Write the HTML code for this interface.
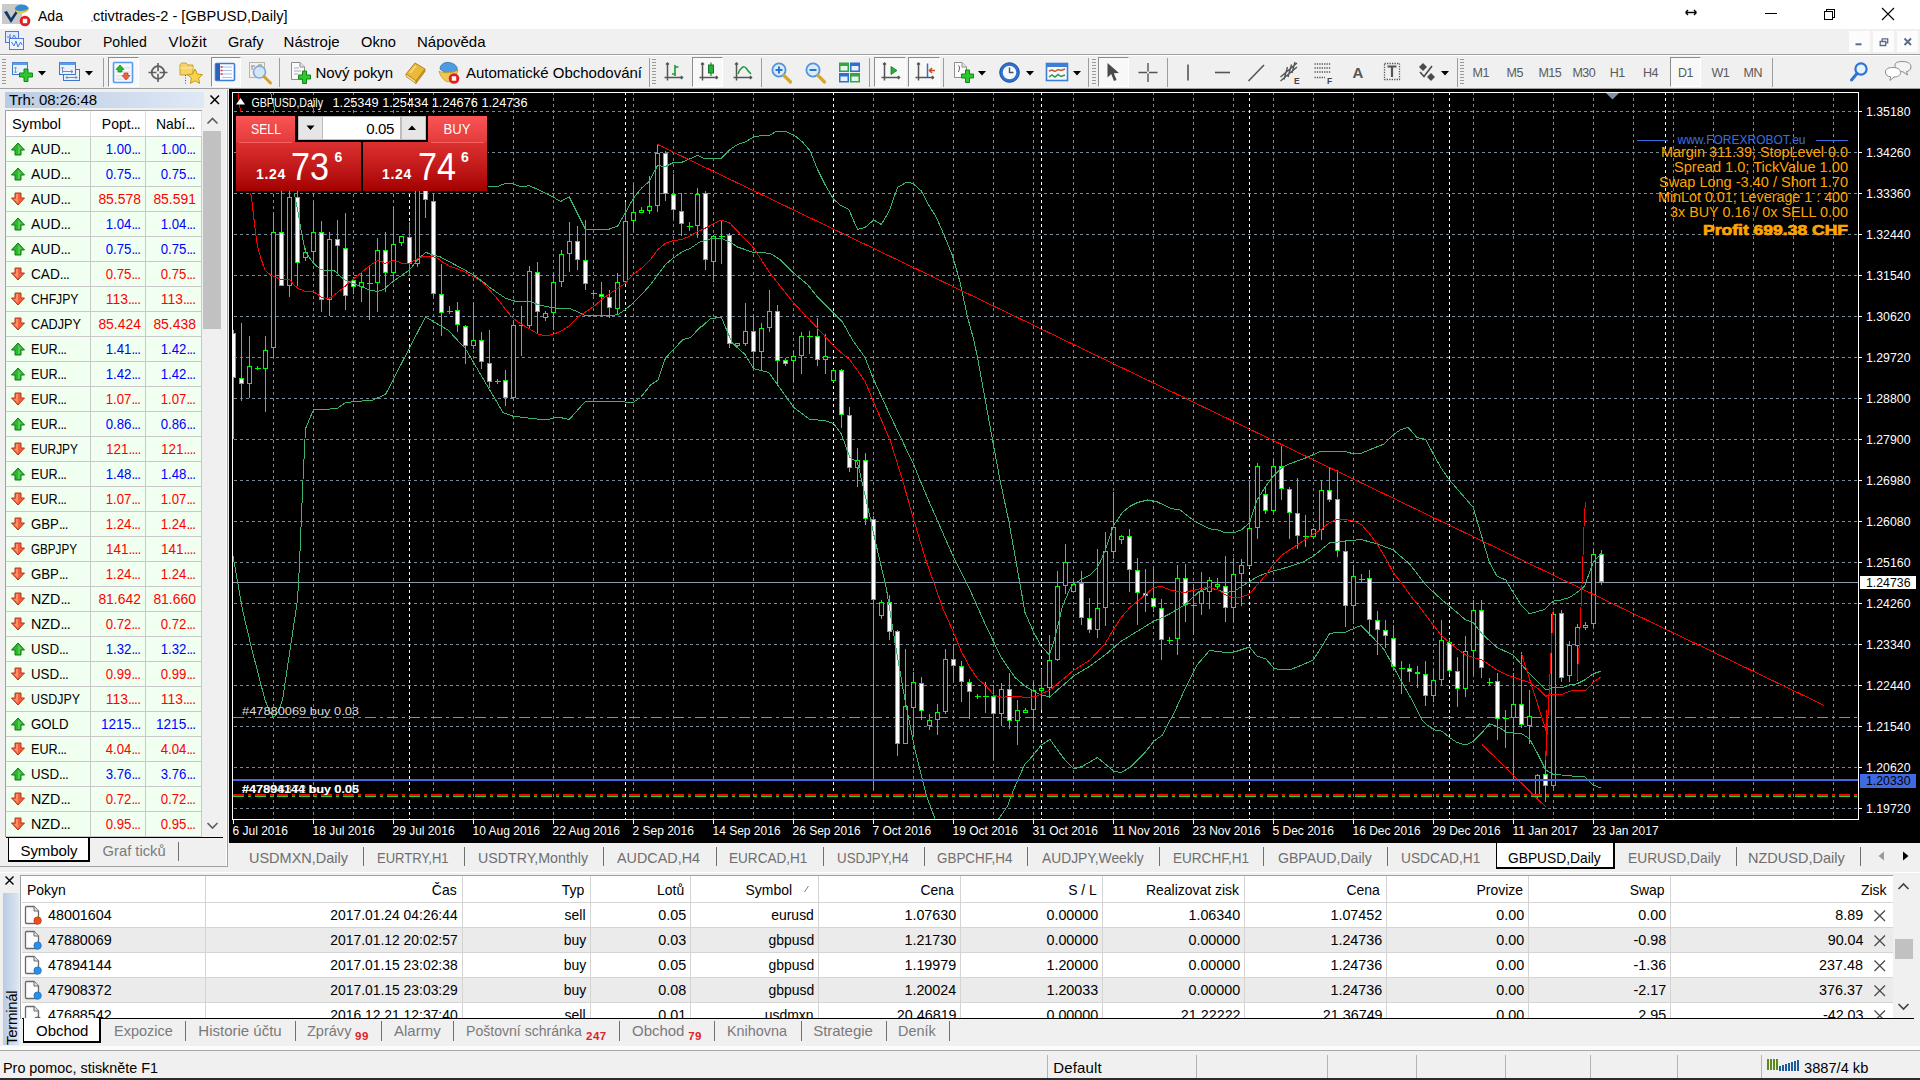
<!DOCTYPE html>
<html lang="cs"><head><meta charset="utf-8"><title>MetaTrader 4 - GBPUSD,Daily</title>
<style>
html,body{margin:0;padding:0;}
body{width:1920px;height:1080px;overflow:hidden;background:#f0f0f0;position:relative;font-family:"Liberation Sans",sans-serif;}
div{position:absolute;box-sizing:border-box;}
.t{white-space:nowrap;}
svg{position:absolute;display:block;}
</style></head><body>
<div style="left:0px;top:0px;width:1920px;height:29px;background:#fff;"></div>
<svg width="32" height="26" viewBox="0 0 32 26" style="left:1px;top:2px" ><rect x="1" y="2" width="20" height="20" fill="#c9c9c9"/>
<path d="M3 10L6 9L10 16L19 3L21 4L10 21Z" fill="#0b3a6b"/>
<path d="M14 6C16 2 24 1 27 5C29 7 27 9 22 10C18 11 14 10 14 6Z" fill="#2f8ad8"/>
<path d="M15 8C18 10 26 9 28 6L27 9C23 12 17 12 15 10Z" fill="#e8c23a"/>
<circle cx="24" cy="19" r="5.3" fill="#e02020"/><rect x="21.8" y="16.8" width="4.4" height="4.4" fill="#fff"/></svg>
<div class="t" style="left:37.50px;top:5.43px;height:22px;line-height:22px;font-size:15.5px;color:#000;transform:scaleX(0.9065);transform-origin:left center;">Ada</div>
<div class="t" style="left:92.50px;top:5.43px;height:22px;line-height:22px;font-size:15.5px;color:#000;transform:scaleX(0.9409);transform-origin:left center;">ctivtrades-2 - [GBPUSD,Daily]</div>
<div style="left:91px;top:20px;width:2px;height:2px;background:#9cc4f0;"></div>
<svg width="240" height="29" viewBox="0 0 240 29" style="left:1680px;top:0px" ><g stroke="#000" stroke-width="1.1" fill="none">
<path d="M5.5 12.5H16.5M5.5 12.5L8 10M5.5 12.5L8 15M16.5 12.5L14 10M16.5 12.5L14 15" stroke-width="1.3"/>
<path d="M85 13.5H97" shape-rendering="crispEdges"/>
<path d="M144.5 11.5H152.5V19.5H144.5Z M146.5 11.5V9.5H154.5V17.5H152.5" shape-rendering="crispEdges"/>
<path d="M202 8L214 20M214 8L202 20"/></g></svg>
<div style="left:0px;top:29px;width:1920px;height:25px;background:#f0f0f0;"></div>
<svg width="22" height="22" viewBox="0 0 22 22" style="left:4px;top:30px" ><rect x="1.5" y="1.5" width="13" height="11" fill="#dfe9fb" stroke="#4a7bd8"/><path d="M3 7H6V4M6 7L8 9L10 5L12 8" stroke="#4a7bd8" fill="none"/>
<rect x="5.5" y="8.5" width="14" height="11" fill="#eef3fd" stroke="#4a7bd8"/><path d="M7.5 12L10 16L12 11L14 17L16.5 12L18 15" stroke="#4a7bd8" fill="none"/></svg>
<div class="t" style="left:34.20px;top:31.10px;height:21px;line-height:21px;font-size:15px;color:#000;transform:scaleX(0.9800);transform-origin:left center;">Soubor</div>
<div class="t" style="left:103.20px;top:31.10px;height:21px;line-height:21px;font-size:15px;color:#000;transform:scaleX(0.9367);transform-origin:left center;">Pohled</div>
<div class="t" style="left:168.60px;top:31.10px;height:21px;line-height:21px;font-size:15px;color:#000;letter-spacing:0.303px;">Vložit</div>
<div class="t" style="left:227.60px;top:31.10px;height:21px;line-height:21px;font-size:15px;color:#000;transform:scaleX(0.9680);transform-origin:left center;">Grafy</div>
<div class="t" style="left:283.60px;top:31.10px;height:21px;line-height:21px;font-size:15px;color:#000;letter-spacing:0.018px;">Nástroje</div>
<div class="t" style="left:360.60px;top:31.10px;height:21px;line-height:21px;font-size:15px;color:#000;transform:scaleX(0.9762);transform-origin:left center;">Okno</div>
<div class="t" style="left:417.00px;top:31.10px;height:21px;line-height:21px;font-size:15px;color:#000;letter-spacing:0.015px;">Nápověda</div>
<div style="left:1848.5px;top:30.5px;width:21.5px;height:21.5px;background:#fcfcfc;"></div>
<div style="left:1872.5px;top:30.5px;width:21.5px;height:21.5px;background:#fcfcfc;"></div>
<div style="left:1896.5px;top:30.5px;width:21.5px;height:21.5px;background:#fcfcfc;"></div>
<svg width="72" height="23" viewBox="0 0 72 23" style="left:1848px;top:30px" ><g stroke="#5b6b8c" stroke-width="1.6" fill="none"><path d="M7.5 14.3H13.5" stroke-width="2"/>
<path d="M32.2 11.5H37.7V15.5H32.2Z M34.2 11V8.8H39.7V12.8H38" stroke-width="1.3"/>
<path d="M56.5 8.5L63 15M63 8.5L56.5 15" stroke-width="1.9"/></g></svg>
<div style="left:0px;top:54px;width:1920px;height:1px;background:#a0a0a0;"></div>
<div style="left:0px;top:55px;width:1920px;height:1px;background:#fff;"></div>
<div style="left:0px;top:56px;width:1920px;height:32px;background:#f0f0f0;"></div>
<div style="left:0px;top:88px;width:1920px;height:1px;background:#a0a0a0;"></div>
<div style="left:2px;top:59px;width:4px;height:27px;background:repeating-linear-gradient(#9a9a9a 0 1px,transparent 1px 3px);"></div>
<div style="left:651.5px;top:59px;width:4px;height:27px;background:repeating-linear-gradient(#9a9a9a 0 1px,transparent 1px 3px);"></div>
<div style="left:1091.5px;top:59px;width:4px;height:27px;background:repeating-linear-gradient(#9a9a9a 0 1px,transparent 1px 3px);"></div>
<div style="left:1460px;top:59px;width:4px;height:27px;background:repeating-linear-gradient(#9a9a9a 0 1px,transparent 1px 3px);"></div>
<div style="left:103px;top:58px;width:1px;height:29px;background:#9c9c9c;"></div>
<div style="left:279px;top:58px;width:1px;height:29px;background:#9c9c9c;"></div>
<div style="left:648.5px;top:58px;width:1px;height:29px;background:#9c9c9c;"></div>
<div style="left:761px;top:58px;width:1px;height:29px;background:#9c9c9c;"></div>
<div style="left:869px;top:58px;width:1px;height:29px;background:#9c9c9c;"></div>
<div style="left:943px;top:58px;width:1px;height:29px;background:#9c9c9c;"></div>
<div style="left:1087.5px;top:58px;width:1px;height:29px;background:#9c9c9c;"></div>
<div style="left:1167px;top:58px;width:1px;height:29px;background:#9c9c9c;"></div>
<div style="left:1456.5px;top:58px;width:1px;height:29px;background:#9c9c9c;"></div>
<div style="left:1771.5px;top:58px;width:1px;height:29px;background:#9c9c9c;"></div>
<div style="left:108px;top:57px;width:31px;height:30px;background:#f8f8f8;border:1px solid #fff;border-top-color:#8c8c8c;border-left-color:#8c8c8c;"></div>
<div style="left:210.5px;top:57px;width:30px;height:30px;background:#f8f8f8;border:1px solid #fff;border-top-color:#8c8c8c;border-left-color:#8c8c8c;"></div>
<div style="left:692px;top:57px;width:31px;height:30px;background:#f8f8f8;border:1px solid #fff;border-top-color:#8c8c8c;border-left-color:#8c8c8c;"></div>
<div style="left:874px;top:57px;width:31.5px;height:30px;background:#f8f8f8;border:1px solid #fff;border-top-color:#8c8c8c;border-left-color:#8c8c8c;"></div>
<div style="left:908px;top:57px;width:31.5px;height:30px;background:#f8f8f8;border:1px solid #fff;border-top-color:#8c8c8c;border-left-color:#8c8c8c;"></div>
<div style="left:1098px;top:57px;width:31px;height:30px;background:#f8f8f8;border:1px solid #fff;border-top-color:#8c8c8c;border-left-color:#8c8c8c;"></div>
<div style="left:1670px;top:57px;width:31px;height:30px;background:#f8f8f8;border:1px solid #fff;border-top-color:#8c8c8c;border-left-color:#8c8c8c;"></div>
<svg width="24" height="24" viewBox="0 0 24 24" style="left:11px;top:61px" ><rect x="1.5" y="1.5" width="15" height="12" fill="#eaf1fc" stroke="#3b78c9"/><rect x="1.5" y="1.5" width="15" height="2.5" fill="#5d9be6"/>
<path d="M4.5 6V12M3 7.5L4.5 6L6 7.5M3 10.5L4.5 12L6 10.5" stroke="#7f9cc0" fill="none"/>
<path d="M13 8H17V12H21.5V16H17V20.5H13V16H8.5V12H13Z" fill="#2fc72f" stroke="#0f8a12" stroke-width="1"/></svg>
<svg width="8" height="5" viewBox="0 0 8 5" style="left:38px;top:71px" ><path d="M0 0H8L4 4.5Z" fill="#000"/></svg>
<svg width="24" height="24" viewBox="0 0 24 24" style="left:58px;top:61px" ><rect x="5.5" y="8.5" width="16" height="11" fill="#eaf1fc" stroke="#3b78c9"/>
<rect x="1.5" y="1.5" width="16" height="12" fill="#eaf1fc" stroke="#3b78c9"/><rect x="1.5" y="1.5" width="16" height="2.5" fill="#5d9be6"/>
<path d="M4.5 6V12M3 7.5L4.5 6L6 7.5M5 10.5H15M13 9L15 10.5L13 12" stroke="#6f8fb8" fill="none"/>
<path d="M8 16.5H19M9.5 15L8 16.5L9.5 18M17.5 15L19 16.5L17.5 18" stroke="#6f8fb8" fill="none"/></svg>
<svg width="8" height="5" viewBox="0 0 8 5" style="left:85px;top:71px" ><path d="M0 0H8L4 4.5Z" fill="#000"/></svg>
<svg width="22" height="24" viewBox="0 0 22 24" style="left:112px;top:61px" ><rect x="1.5" y="1.5" width="19" height="20" rx="1" fill="#f4f7fc" stroke="#5b9ae8" stroke-width="1.6"/>
<path d="M4 7H18M4 11H18M4 15H18M4 18H18" stroke="#d4dbe6"/>
<path d="M8 4L12 8.5H10V11H6V8.5H4Z" fill="#2db52d" stroke="#138a13" stroke-width=".7"/>
<path d="M14 19L10 14.5H12V12H16V14.5H18Z" fill="#f0603a" stroke="#c43a1a" stroke-width=".7"/></svg>
<svg width="22" height="24" viewBox="0 0 22 24" style="left:147px;top:61px" ><circle cx="11" cy="11.5" r="6.3" fill="none" stroke="#5e5e5e" stroke-width="1.8"/><path d="M11 2V21M1.5 11.5H20.5" stroke="#5e5e5e" stroke-width="1.6"/><circle cx="11" cy="11.5" r="1.6" fill="#f0f0f0"/></svg>
<svg width="26" height="26" viewBox="0 0 26 26" style="left:178px;top:60px" ><path d="M2 6C2 4 3 3 4.5 3H8L10 5H15V15H2Z" fill="#f5d36a" stroke="#c9a227"/><path d="M2 8H15" stroke="#fbe9a6"/>
<path d="M7.5 15V24" stroke="#555" stroke-dasharray="1 1.5"/>
<path d="M17 9L19.3 14L24.5 14.6L20.6 18.2L21.7 23.5L17 20.8L12.3 23.5L13.4 18.2L9.5 14.6L14.7 14Z" fill="#f7d54a" stroke="#c79a1a"/></svg>
<svg width="22" height="24" viewBox="0 0 22 24" style="left:214px;top:61px" ><rect x="1.5" y="2.5" width="19" height="17" rx="1" fill="#fbfcff" stroke="#3c7fd6" stroke-width="1.6"/><rect x="2" y="3" width="4" height="16" fill="#2a62b8"/>
<path d="M8 6H18M8 9.5H18M8 13H18M8 16.5H18" stroke="#aac0ea"/><path d="M6.5 6H8.5M6.5 9.5H8.5M6.5 13H8.5" stroke="#d03030" stroke-width="1.6"/></svg>
<svg width="26" height="26" viewBox="0 0 26 26" style="left:248px;top:60px" ><rect x="1.5" y="2.5" width="15" height="15" fill="#f3f0ea" stroke="#b9b4aa"/><path d="M4 6V10M3 6H7M10 5H14M12 5V9" stroke="#8a8a8a"/>
<circle cx="11.5" cy="12" r="6" fill="#cfe4fa" fill-opacity=".85" stroke="#7fa9d8" stroke-width="1.6"/><path d="M16 16.5L22.5 23" stroke="#d6a12a" stroke-width="3" stroke-linecap="round"/></svg>
<svg width="24" height="26" viewBox="0 0 24 26" style="left:289px;top:60px" ><path d="M2.5 2.5H11L15.5 7V19.5H2.5Z" fill="#fbfbfb" stroke="#8d8d8d"/><path d="M11 2.5V7H15.5" fill="#e6e6e6" stroke="#8d8d8d"/><path d="M5 8H10M5 11H12M5 14H9" stroke="#a8a8a8"/>
<path d="M13.5 11H17.5V15H21.5V19H17.5V23.5H13.5V19H9.5V15H13.5Z" fill="#2fc72f" stroke="#0f8a12"/></svg>
<svg width="24" height="24" viewBox="0 0 24 24" style="left:404px;top:61px" ><path d="M2 13L11 2L21 8L12 20Z" fill="#e9b93a" stroke="#b5851a"/><path d="M2 13L12 20L12 22.5L2 15.5Z" fill="#f6e3a0" stroke="#b5851a" stroke-width=".8"/><path d="M12 20L21 8V10.5L12 22.5Z" fill="#c9962a" stroke="#b5851a" stroke-width=".8"/><path d="M6 12L12 5" stroke="#f7dc86" stroke-width="1.5"/></svg>
<svg width="26" height="26" viewBox="0 0 26 26" style="left:436px;top:60px" ><path d="M4 9C4 4 10 1 15 3C20 4 22 8 21 11L12 15Z" fill="#4f9be0" stroke="#2f74b8" stroke-width=".8"/><path d="M3 11C6 13 15 14 22 10L21 13C19 17 16 21 12 22C8 21 4 16 3 11Z" fill="#f0c850" stroke="#c79a1a" stroke-width=".8"/>
<circle cx="18" cy="18.5" r="5.3" fill="#e02020"/><rect x="15.8" y="16.3" width="4.4" height="4.4" fill="#fff"/></svg>
<svg width="22" height="24" viewBox="0 0 22 24" style="left:663px;top:61px" ><path d="M4.5 2V19.5M1.5 16.5H19.5M3 3.5L4.5 2L6 3.5M18 15L19.5 16.5L18 18" stroke="#555" stroke-width="1.5" fill="none"/><path d="M12 4V15M12 6H15.5M9 13H12" stroke="#1c9a2c" stroke-width="1.6" fill="none"/></svg>
<svg width="22" height="24" viewBox="0 0 22 24" style="left:698px;top:61px" ><path d="M4.5 2V19.5M1.5 16.5H19.5M3 3.5L4.5 2L6 3.5M18 15L19.5 16.5L18 18" stroke="#555" stroke-width="1.5" fill="none"/><path d="M13 1.5V15" stroke="#1c9a2c" stroke-width="1.3"/><rect x="10.5" y="4" width="5" height="8" fill="#24b03a" stroke="#157a22"/></svg>
<svg width="22" height="24" viewBox="0 0 22 24" style="left:732px;top:61px" ><path d="M4.5 2V19.5M1.5 16.5H19.5M3 3.5L4.5 2L6 3.5M18 15L19.5 16.5L18 18" stroke="#555" stroke-width="1.5" fill="none"/><path d="M6 13C8 7 12 4 14 7C16 10 18 12 19 13" stroke="#1c9a2c" stroke-width="1.4" fill="none"/></svg>
<svg width="24" height="24" viewBox="0 0 24 24" style="left:770px;top:61px" ><circle cx="9" cy="9" r="6.6" fill="#d9ecfb" stroke="#4f94dc" stroke-width="1.8"/><path d="M14 14.5L20.5 21" stroke="#d9a52c" stroke-width="3.2" stroke-linecap="round"/><path d="M5.5 9H12.5M9 5.5V12.5" stroke="#2f74c8" stroke-width="2"/></svg>
<svg width="24" height="24" viewBox="0 0 24 24" style="left:804px;top:61px" ><circle cx="9" cy="9" r="6.6" fill="#d9ecfb" stroke="#4f94dc" stroke-width="1.8"/><path d="M14 14.5L20.5 21" stroke="#d9a52c" stroke-width="3.2" stroke-linecap="round"/><path d="M5.5 9H12.5" stroke="#2f74c8" stroke-width="2"/></svg>
<svg width="23" height="24" viewBox="0 0 23 24" style="left:838px;top:61px" ><rect x="1" y="1.5" width="10" height="9.5" fill="#34a834"/><rect x="12" y="1.5" width="10" height="9.5" fill="#2f6fd0"/><rect x="1" y="12" width="10" height="9.5" fill="#2f6fd0"/><rect x="12" y="12" width="10" height="9.5" fill="#34a834"/>
<g fill="#e8f0fb"><rect x="2.5" y="5" width="7" height="4.5"/><rect x="13.5" y="5" width="7" height="4.5"/><rect x="2.5" y="15.5" width="7" height="4.5"/><rect x="13.5" y="15.5" width="7" height="4.5"/></g></svg>
<svg width="22" height="24" viewBox="0 0 22 24" style="left:880px;top:61px" ><path d="M4.5 2V19.5M1.5 16.5H19.5M3 3.5L4.5 2L6 3.5M18 15L19.5 16.5L18 18" stroke="#555" stroke-width="1.5" fill="none"/><path d="M11 5.5L17 9.5L11 13.5Z" fill="#24b03a" stroke="#157a22" stroke-width=".8"/></svg>
<svg width="24" height="24" viewBox="0 0 24 24" style="left:914px;top:61px" ><path d="M4.5 2V19.5M1.5 16.5H19.5M3 3.5L4.5 2L6 3.5M18 15L19.5 16.5L18 18" stroke="#555" stroke-width="1.5" fill="none"/><path d="M13.5 2.5V16" stroke="#2f6fd0" stroke-width="1.5"/><path d="M21 9.5H16M18 7L15.5 9.5L18 12" stroke="#d04a20" stroke-width="1.6" fill="none"/></svg>
<svg width="26" height="26" viewBox="0 0 26 26" style="left:952px;top:60px" ><path d="M2.5 2.5H10L14.5 7V17.5H2.5Z" fill="#fbfbfb" stroke="#8d8d8d"/><path d="M10 2.5V7H14.5" fill="#e6e6e6" stroke="#8d8d8d"/><path d="M6 6C8 5 8 8 6.5 12" stroke="#666" fill="none"/>
<path d="M13.5 10H17.5V14H21.5V18H17.5V22.5H13.5V18H9.5V14H13.5Z" fill="#2fc72f" stroke="#0f8a12"/></svg>
<svg width="8" height="5" viewBox="0 0 8 5" style="left:978px;top:71px" ><path d="M0 0H8L4 4.5Z" fill="#000"/></svg>
<svg width="24" height="24" viewBox="0 0 24 24" style="left:998px;top:61px" ><circle cx="11.5" cy="11.5" r="9.8" fill="#2f6fd0" stroke="#1f4f9c"/><circle cx="11.5" cy="11.5" r="6.8" fill="#f4f8ff"/><path d="M11.5 6.5V11.5H15.5" stroke="#555" stroke-width="1.4" fill="none"/></svg>
<svg width="8" height="5" viewBox="0 0 8 5" style="left:1025.5px;top:71px" ><path d="M0 0H8L4 4.5Z" fill="#000"/></svg>
<svg width="24" height="24" viewBox="0 0 24 24" style="left:1045px;top:61px" ><rect x="1.5" y="2.5" width="21" height="17" fill="#f6f9ff" stroke="#3c7fd6" stroke-width="1.6"/><rect x="1.5" y="2.5" width="21" height="3.5" fill="#3c7fd6"/>
<path d="M4 10L7 9L10 10.5L13 8.5L16 9.5L20 8" stroke="#d0522a" stroke-width="1.5" fill="none"/><path d="M4 16L7 14L10 16L13 13.5L16 15.5L20 14" stroke="#2a9a3a" stroke-width="1.5" fill="none"/></svg>
<svg width="8" height="5" viewBox="0 0 8 5" style="left:1072.5px;top:71px" ><path d="M0 0H8L4 4.5Z" fill="#000"/></svg>
<svg width="20" height="24" viewBox="0 0 20 24" style="left:1104px;top:61px" ><path d="M3.5 2L3.5 16.5L7.2 13L10 20L12.6 19L9.8 12.2L15 12Z" fill="#4a4a4a"/></svg>
<svg width="22" height="24" viewBox="0 0 22 24" style="left:1137px;top:61px" ><path d="M11 2V21M1.5 11.5H20.5" stroke="#555" stroke-width="1.4"/><rect x="10" y="10.5" width="2" height="2" fill="#f0f0f0"/></svg>
<svg width="16" height="24" viewBox="0 0 16 24" style="left:1180px;top:61px" ><path d="M8 3.5V19.5" stroke="#555" stroke-width="1.6"/></svg>
<svg width="20" height="24" viewBox="0 0 20 24" style="left:1213px;top:61px" ><path d="M2 11.5H17" stroke="#555" stroke-width="1.6"/></svg>
<svg width="20" height="24" viewBox="0 0 20 24" style="left:1246px;top:61px" ><path d="M2.5 20L18 4" stroke="#555" stroke-width="1.6"/></svg>
<svg width="22" height="26" viewBox="0 0 22 26" style="left:1279px;top:60px" ><path d="M1.5 17L18 3M1.5 21L18 7M5 19.5L8.5 7M9 17L12.5 4.5M13 13L16 2" stroke="#555" stroke-width="1.4" fill="none"/><text x="15" y="24" font-family="Liberation Sans, sans-serif" font-size="8.5" font-weight="bold" fill="#444">E</text></svg>
<svg width="22" height="26" viewBox="0 0 22 26" style="left:1313px;top:60px" ><path d="M1.5 4H18M1.5 8H18M1.5 12H18M1.5 17.5H12" stroke="#555" stroke-width="1.4" stroke-dasharray="1.3 1.1" fill="none"/><text x="14" y="24" font-family="Liberation Sans, sans-serif" font-size="8.5" font-weight="bold" fill="#444">F</text></svg>
<svg width="20" height="26" viewBox="0 0 20 26" style="left:1383px;top:60px" ><rect x="1.5" y="3.5" width="15" height="16" fill="none" stroke="#555" stroke-width="1.3" stroke-dasharray="1.3 1.2"/><path d="M4.5 6.5H13.5M9 6.5V17" stroke="#555" stroke-width="2.2"/></svg>
<svg width="22" height="26" viewBox="0 0 22 26" style="left:1416px;top:60px" ><path d="M7 3L11 7L7 11L3 7Z M15 13L19 17L15 21L11 17Z" fill="#4a4a4a"/><path d="M4 12L8 16.5L16 6" stroke="#4a4a4a" stroke-width="1.6" fill="none"/></svg>
<svg width="8" height="5" viewBox="0 0 8 5" style="left:1440.5px;top:71px" ><path d="M0 0H8L4 4.5Z" fill="#000"/></svg>
<svg width="22" height="26" viewBox="0 0 22 26" style="left:1848px;top:60px" ><circle cx="13" cy="9" r="5.6" fill="#e8f2fd" stroke="#2f74d0" stroke-width="2.2"/><path d="M9 13.5L3.5 20" stroke="#2f74d0" stroke-width="3" stroke-linecap="round"/></svg>
<svg width="30" height="26" viewBox="0 0 30 26" style="left:1884px;top:60px" ><path d="M11 5C11 2.5 14 1.5 18.5 1.5C23 1.5 27 3 27 7C27 10 24 11.5 22.5 11.5L23.5 15L19 11.8C14 11.8 11 9 11 5Z" fill="#f4f4f4" stroke="#8a8a8a"/><path d="M1.5 12C1.5 8.5 5 7.5 9 7.5C13 7.5 16.5 9 16.5 12.5C16.5 16 13 17 10 17L6 20.5L6.5 16.8C3.5 16.5 1.5 15 1.5 12Z" fill="#fff" stroke="#8a8a8a"/></svg>
<div class="t" style="left:315.50px;top:61.80px;height:21px;line-height:21px;font-size:15px;color:#000;letter-spacing:-0.087px;">Nový pokyn</div>
<div class="t" style="left:466.00px;top:61.80px;height:21px;line-height:21px;font-size:15px;color:#000;letter-spacing:0.003px;">Automatické Obchodování</div>
<div class="t" style="left:1352.38px;top:61.80px;height:21px;line-height:21px;font-size:15px;color:#555;letter-spacing:0.000px;font-weight:bold;">A</div>
<div class="t" style="left:1472.59px;top:63.60px;height:18px;line-height:18px;font-size:12.5px;color:#5a5a5a;letter-spacing:-0.550px;">M1</div>
<div class="t" style="left:1506.59px;top:63.60px;height:18px;line-height:18px;font-size:12.5px;color:#5a5a5a;letter-spacing:-0.550px;">M5</div>
<div class="t" style="left:1538.39px;top:63.60px;height:18px;line-height:18px;font-size:12.5px;color:#5a5a5a;letter-spacing:-0.550px;">M15</div>
<div class="t" style="left:1572.39px;top:63.60px;height:18px;line-height:18px;font-size:12.5px;color:#5a5a5a;letter-spacing:-0.550px;">M30</div>
<div class="t" style="left:1609.79px;top:63.60px;height:18px;line-height:18px;font-size:12.5px;color:#5a5a5a;letter-spacing:-0.550px;">H1</div>
<div class="t" style="left:1642.99px;top:63.60px;height:18px;line-height:18px;font-size:12.5px;color:#5a5a5a;letter-spacing:-0.550px;">H4</div>
<div class="t" style="left:1677.99px;top:63.60px;height:18px;line-height:18px;font-size:12.5px;color:#5a5a5a;letter-spacing:-0.550px;">D1</div>
<div class="t" style="left:1711.60px;top:63.60px;height:18px;line-height:18px;font-size:12.5px;color:#5a5a5a;letter-spacing:-0.550px;">W1</div>
<div class="t" style="left:1743.56px;top:63.60px;height:18px;line-height:18px;font-size:12.5px;color:#5a5a5a;letter-spacing:-0.550px;">MN</div>
<div style="left:0px;top:89px;width:229px;height:781px;background:#f0f0f0;"></div>
<div style="left:226px;top:90px;width:1px;height:776px;background:#fff;"></div>
<div style="left:227px;top:90px;width:1px;height:777px;background:#a0a0a0;"></div>
<div style="left:0px;top:866px;width:228px;height:1px;background:#a0a0a0;"></div>
<div style="left:5px;top:92px;width:199px;height:16px;background:linear-gradient(90deg,#b9cbe4,#dfe8f5);"></div>
<div class="t" style="left:9.00px;top:89.30px;height:21px;line-height:21px;font-size:15px;color:#000;letter-spacing:-0.051px;">Trh: 08:26:48</div>
<svg width="12" height="12" style="left:209px;top:94px"><path d="M1.5 1.5L10 10M10 1.5L1.5 10" stroke="#000" stroke-width="1.5" fill="none"/></svg>
<div style="left:5px;top:110px;width:197px;height:727px;background:#fff;border-left:1px solid #a0a0a0;border-top:1px solid #a0a0a0;"></div>
<div style="left:90px;top:111px;width:1px;height:26px;background:#e0e0e0;"></div>
<div style="left:145px;top:111px;width:1px;height:26px;background:#e0e0e0;"></div>
<div style="left:201px;top:111px;width:1px;height:26px;background:#e0e0e0;"></div>
<div class="t" style="left:12.00px;top:113.00px;height:21px;line-height:21px;font-size:15px;color:#000;transform:scaleX(0.9797);transform-origin:left center;">Symbol</div>
<div class="t" style="left:99.11px;top:113.00px;height:21px;line-height:21px;font-size:15px;color:#000;transform:scaleX(0.9300);transform-origin:right center;">Popt<span style="letter-spacing:-0.82px">...</span></div>
<div class="t" style="left:153.29px;top:113.00px;height:21px;line-height:21px;font-size:15px;color:#000;transform:scaleX(0.9300);transform-origin:right center;">Nabí<span style="letter-spacing:-0.82px">...</span></div>
<div style="left:6px;top:137px;width:196px;height:700px;background:#f0fff0;"></div>
<svg width="197" height="701" style="left:5px;top:136px" shape-rendering="crispEdges"><path d="M1 0.5H197 M1 25.5H197 M1 50.5H197 M1 75.5H197 M1 100.5H197 M1 125.5H197 M1 150.5H197 M1 175.5H197 M1 200.5H197 M1 225.5H197 M1 250.5H197 M1 275.5H197 M1 300.5H197 M1 325.5H197 M1 350.5H197 M1 375.5H197 M1 400.5H197 M1 425.5H197 M1 450.5H197 M1 475.5H197 M1 500.5H197 M1 525.5H197 M1 550.5H197 M1 575.5H197 M1 600.5H197 M1 625.5H197 M1 650.5H197 M1 675.5H197 M1 700.5H197 M85.5 0V700M140.5 0V700M196.5 0V700" stroke="#c8c8c8" stroke-width="1" fill="none"/></svg>
<div class="t" style="left:31.20px;top:138.10px;height:21px;line-height:21px;font-size:15px;color:#000;transform:scaleX(0.9353);transform-origin:left center;">AUD<span style="letter-spacing:-0.82px">...</span></div>
<div class="t" style="left:101.28px;top:138.10px;height:21px;line-height:21px;font-size:15px;color:#0000ff;transform:scaleX(0.8796);transform-origin:right center;">1.00<span style="letter-spacing:-0.82px">...</span></div>
<div class="t" style="left:156.28px;top:138.10px;height:21px;line-height:21px;font-size:15px;color:#0000ff;transform:scaleX(0.8796);transform-origin:right center;">1.00<span style="letter-spacing:-0.82px">...</span></div>
<div class="t" style="left:31.20px;top:163.10px;height:21px;line-height:21px;font-size:15px;color:#000;transform:scaleX(0.9353);transform-origin:left center;">AUD<span style="letter-spacing:-0.82px">...</span></div>
<div class="t" style="left:101.28px;top:163.10px;height:21px;line-height:21px;font-size:15px;color:#0000ff;transform:scaleX(0.8796);transform-origin:right center;">0.75<span style="letter-spacing:-0.82px">...</span></div>
<div class="t" style="left:156.28px;top:163.10px;height:21px;line-height:21px;font-size:15px;color:#0000ff;transform:scaleX(0.8796);transform-origin:right center;">0.75<span style="letter-spacing:-0.82px">...</span></div>
<div class="t" style="left:31.20px;top:188.10px;height:21px;line-height:21px;font-size:15px;color:#000;transform:scaleX(0.9353);transform-origin:left center;">AUD<span style="letter-spacing:-0.82px">...</span></div>
<div class="t" style="left:94.62px;top:188.10px;height:21px;line-height:21px;font-size:15px;color:#ff0000;transform:scaleX(0.9264);transform-origin:right center;">85.578</div>
<div class="t" style="left:149.62px;top:188.10px;height:21px;line-height:21px;font-size:15px;color:#ff0000;transform:scaleX(0.9264);transform-origin:right center;">85.591</div>
<div class="t" style="left:31.20px;top:213.10px;height:21px;line-height:21px;font-size:15px;color:#000;transform:scaleX(0.9353);transform-origin:left center;">AUD<span style="letter-spacing:-0.82px">...</span></div>
<div class="t" style="left:101.28px;top:213.10px;height:21px;line-height:21px;font-size:15px;color:#0000ff;transform:scaleX(0.8796);transform-origin:right center;">1.04<span style="letter-spacing:-0.82px">...</span></div>
<div class="t" style="left:156.28px;top:213.10px;height:21px;line-height:21px;font-size:15px;color:#0000ff;transform:scaleX(0.8796);transform-origin:right center;">1.04<span style="letter-spacing:-0.82px">...</span></div>
<div class="t" style="left:31.20px;top:238.10px;height:21px;line-height:21px;font-size:15px;color:#000;transform:scaleX(0.9353);transform-origin:left center;">AUD<span style="letter-spacing:-0.82px">...</span></div>
<div class="t" style="left:101.28px;top:238.10px;height:21px;line-height:21px;font-size:15px;color:#0000ff;transform:scaleX(0.8796);transform-origin:right center;">0.75<span style="letter-spacing:-0.82px">...</span></div>
<div class="t" style="left:156.28px;top:238.10px;height:21px;line-height:21px;font-size:15px;color:#0000ff;transform:scaleX(0.8796);transform-origin:right center;">0.75<span style="letter-spacing:-0.82px">...</span></div>
<div class="t" style="left:31.20px;top:263.10px;height:21px;line-height:21px;font-size:15px;color:#000;transform:scaleX(0.9113);transform-origin:left center;">CAD<span style="letter-spacing:-0.82px">...</span></div>
<div class="t" style="left:101.28px;top:263.10px;height:21px;line-height:21px;font-size:15px;color:#ff0000;transform:scaleX(0.8796);transform-origin:right center;">0.75<span style="letter-spacing:-0.82px">...</span></div>
<div class="t" style="left:156.28px;top:263.10px;height:21px;line-height:21px;font-size:15px;color:#ff0000;transform:scaleX(0.8796);transform-origin:right center;">0.75<span style="letter-spacing:-0.82px">...</span></div>
<div class="t" style="left:31.20px;top:288.10px;height:21px;line-height:21px;font-size:15px;color:#000;transform:scaleX(0.8142);transform-origin:left center;">CHFJPY</div>
<div class="t" style="left:103.22px;top:288.10px;height:21px;line-height:21px;font-size:15px;color:#ff0000;transform:scaleX(0.9253);transform-origin:right center;">113<span style="letter-spacing:-0.82px">....</span></div>
<div class="t" style="left:158.22px;top:288.10px;height:21px;line-height:21px;font-size:15px;color:#ff0000;transform:scaleX(0.9253);transform-origin:right center;">113<span style="letter-spacing:-0.82px">....</span></div>
<div class="t" style="left:31.20px;top:313.10px;height:21px;line-height:21px;font-size:15px;color:#000;transform:scaleX(0.8449);transform-origin:left center;">CADJPY</div>
<div class="t" style="left:94.62px;top:313.10px;height:21px;line-height:21px;font-size:15px;color:#ff0000;transform:scaleX(0.9264);transform-origin:right center;">85.424</div>
<div class="t" style="left:149.62px;top:313.10px;height:21px;line-height:21px;font-size:15px;color:#ff0000;transform:scaleX(0.9264);transform-origin:right center;">85.438</div>
<div class="t" style="left:31.20px;top:338.10px;height:21px;line-height:21px;font-size:15px;color:#000;transform:scaleX(0.8394);transform-origin:left center;">EUR<span style="letter-spacing:-0.82px">...</span></div>
<div class="t" style="left:101.28px;top:338.10px;height:21px;line-height:21px;font-size:15px;color:#0000ff;transform:scaleX(0.8796);transform-origin:right center;">1.41<span style="letter-spacing:-0.82px">...</span></div>
<div class="t" style="left:156.28px;top:338.10px;height:21px;line-height:21px;font-size:15px;color:#0000ff;transform:scaleX(0.8796);transform-origin:right center;">1.42<span style="letter-spacing:-0.82px">...</span></div>
<div class="t" style="left:31.20px;top:363.10px;height:21px;line-height:21px;font-size:15px;color:#000;transform:scaleX(0.8394);transform-origin:left center;">EUR<span style="letter-spacing:-0.82px">...</span></div>
<div class="t" style="left:101.28px;top:363.10px;height:21px;line-height:21px;font-size:15px;color:#0000ff;transform:scaleX(0.8796);transform-origin:right center;">1.42<span style="letter-spacing:-0.82px">...</span></div>
<div class="t" style="left:156.28px;top:363.10px;height:21px;line-height:21px;font-size:15px;color:#0000ff;transform:scaleX(0.8796);transform-origin:right center;">1.42<span style="letter-spacing:-0.82px">...</span></div>
<div class="t" style="left:31.20px;top:388.10px;height:21px;line-height:21px;font-size:15px;color:#000;transform:scaleX(0.8394);transform-origin:left center;">EUR<span style="letter-spacing:-0.82px">...</span></div>
<div class="t" style="left:101.28px;top:388.10px;height:21px;line-height:21px;font-size:15px;color:#ff0000;transform:scaleX(0.8796);transform-origin:right center;">1.07<span style="letter-spacing:-0.82px">...</span></div>
<div class="t" style="left:156.28px;top:388.10px;height:21px;line-height:21px;font-size:15px;color:#ff0000;transform:scaleX(0.8796);transform-origin:right center;">1.07<span style="letter-spacing:-0.82px">...</span></div>
<div class="t" style="left:31.20px;top:413.10px;height:21px;line-height:21px;font-size:15px;color:#000;transform:scaleX(0.8394);transform-origin:left center;">EUR<span style="letter-spacing:-0.82px">...</span></div>
<div class="t" style="left:101.28px;top:413.10px;height:21px;line-height:21px;font-size:15px;color:#0000ff;transform:scaleX(0.8796);transform-origin:right center;">0.86<span style="letter-spacing:-0.82px">...</span></div>
<div class="t" style="left:156.28px;top:413.10px;height:21px;line-height:21px;font-size:15px;color:#0000ff;transform:scaleX(0.8796);transform-origin:right center;">0.86<span style="letter-spacing:-0.82px">...</span></div>
<div class="t" style="left:31.20px;top:438.10px;height:21px;line-height:21px;font-size:15px;color:#000;transform:scaleX(0.7942);transform-origin:left center;">EURJPY</div>
<div class="t" style="left:102.10px;top:438.10px;height:21px;line-height:21px;font-size:15px;color:#ff0000;transform:scaleX(0.8985);transform-origin:right center;">121<span style="letter-spacing:-0.82px">....</span></div>
<div class="t" style="left:157.10px;top:438.10px;height:21px;line-height:21px;font-size:15px;color:#ff0000;transform:scaleX(0.8985);transform-origin:right center;">121<span style="letter-spacing:-0.82px">....</span></div>
<div class="t" style="left:31.20px;top:463.10px;height:21px;line-height:21px;font-size:15px;color:#000;transform:scaleX(0.8394);transform-origin:left center;">EUR<span style="letter-spacing:-0.82px">...</span></div>
<div class="t" style="left:101.28px;top:463.10px;height:21px;line-height:21px;font-size:15px;color:#0000ff;transform:scaleX(0.8796);transform-origin:right center;">1.48<span style="letter-spacing:-0.82px">...</span></div>
<div class="t" style="left:156.28px;top:463.10px;height:21px;line-height:21px;font-size:15px;color:#0000ff;transform:scaleX(0.8796);transform-origin:right center;">1.48<span style="letter-spacing:-0.82px">...</span></div>
<div class="t" style="left:31.20px;top:488.10px;height:21px;line-height:21px;font-size:15px;color:#000;transform:scaleX(0.8394);transform-origin:left center;">EUR<span style="letter-spacing:-0.82px">...</span></div>
<div class="t" style="left:101.28px;top:488.10px;height:21px;line-height:21px;font-size:15px;color:#ff0000;transform:scaleX(0.8796);transform-origin:right center;">1.07<span style="letter-spacing:-0.82px">...</span></div>
<div class="t" style="left:156.28px;top:488.10px;height:21px;line-height:21px;font-size:15px;color:#ff0000;transform:scaleX(0.8796);transform-origin:right center;">1.07<span style="letter-spacing:-0.82px">...</span></div>
<div class="t" style="left:31.20px;top:513.10px;height:21px;line-height:21px;font-size:15px;color:#000;transform:scaleX(0.8799);transform-origin:left center;">GBP<span style="letter-spacing:-0.82px">...</span></div>
<div class="t" style="left:101.28px;top:513.10px;height:21px;line-height:21px;font-size:15px;color:#ff0000;transform:scaleX(0.8796);transform-origin:right center;">1.24<span style="letter-spacing:-0.82px">...</span></div>
<div class="t" style="left:156.28px;top:513.10px;height:21px;line-height:21px;font-size:15px;color:#ff0000;transform:scaleX(0.8796);transform-origin:right center;">1.24<span style="letter-spacing:-0.82px">...</span></div>
<div class="t" style="left:31.20px;top:538.10px;height:21px;line-height:21px;font-size:15px;color:#000;transform:scaleX(0.7771);transform-origin:left center;">GBPJPY</div>
<div class="t" style="left:102.10px;top:538.10px;height:21px;line-height:21px;font-size:15px;color:#ff0000;transform:scaleX(0.8985);transform-origin:right center;">141<span style="letter-spacing:-0.82px">....</span></div>
<div class="t" style="left:157.10px;top:538.10px;height:21px;line-height:21px;font-size:15px;color:#ff0000;transform:scaleX(0.8985);transform-origin:right center;">141<span style="letter-spacing:-0.82px">....</span></div>
<div class="t" style="left:31.20px;top:563.10px;height:21px;line-height:21px;font-size:15px;color:#000;transform:scaleX(0.8799);transform-origin:left center;">GBP<span style="letter-spacing:-0.82px">...</span></div>
<div class="t" style="left:101.28px;top:563.10px;height:21px;line-height:21px;font-size:15px;color:#ff0000;transform:scaleX(0.8796);transform-origin:right center;">1.24<span style="letter-spacing:-0.82px">...</span></div>
<div class="t" style="left:156.28px;top:563.10px;height:21px;line-height:21px;font-size:15px;color:#ff0000;transform:scaleX(0.8796);transform-origin:right center;">1.24<span style="letter-spacing:-0.82px">...</span></div>
<div class="t" style="left:31.20px;top:588.10px;height:21px;line-height:21px;font-size:15px;color:#000;transform:scaleX(0.9546);transform-origin:left center;">NZD<span style="letter-spacing:-0.82px">...</span></div>
<div class="t" style="left:94.62px;top:588.10px;height:21px;line-height:21px;font-size:15px;color:#ff0000;transform:scaleX(0.9264);transform-origin:right center;">81.642</div>
<div class="t" style="left:149.62px;top:588.10px;height:21px;line-height:21px;font-size:15px;color:#ff0000;transform:scaleX(0.9264);transform-origin:right center;">81.660</div>
<div class="t" style="left:31.20px;top:613.10px;height:21px;line-height:21px;font-size:15px;color:#000;transform:scaleX(0.9546);transform-origin:left center;">NZD<span style="letter-spacing:-0.82px">...</span></div>
<div class="t" style="left:101.28px;top:613.10px;height:21px;line-height:21px;font-size:15px;color:#ff0000;transform:scaleX(0.8796);transform-origin:right center;">0.72<span style="letter-spacing:-0.82px">...</span></div>
<div class="t" style="left:156.28px;top:613.10px;height:21px;line-height:21px;font-size:15px;color:#ff0000;transform:scaleX(0.8796);transform-origin:right center;">0.72<span style="letter-spacing:-0.82px">...</span></div>
<div class="t" style="left:31.20px;top:638.10px;height:21px;line-height:21px;font-size:15px;color:#000;transform:scaleX(0.8873);transform-origin:left center;">USD<span style="letter-spacing:-0.82px">...</span></div>
<div class="t" style="left:101.28px;top:638.10px;height:21px;line-height:21px;font-size:15px;color:#0000ff;transform:scaleX(0.8796);transform-origin:right center;">1.32<span style="letter-spacing:-0.82px">...</span></div>
<div class="t" style="left:156.28px;top:638.10px;height:21px;line-height:21px;font-size:15px;color:#0000ff;transform:scaleX(0.8796);transform-origin:right center;">1.32<span style="letter-spacing:-0.82px">...</span></div>
<div class="t" style="left:31.20px;top:663.10px;height:21px;line-height:21px;font-size:15px;color:#000;transform:scaleX(0.8873);transform-origin:left center;">USD<span style="letter-spacing:-0.82px">...</span></div>
<div class="t" style="left:101.28px;top:663.10px;height:21px;line-height:21px;font-size:15px;color:#ff0000;transform:scaleX(0.8796);transform-origin:right center;">0.99<span style="letter-spacing:-0.82px">...</span></div>
<div class="t" style="left:156.28px;top:663.10px;height:21px;line-height:21px;font-size:15px;color:#ff0000;transform:scaleX(0.8796);transform-origin:right center;">0.99<span style="letter-spacing:-0.82px">...</span></div>
<div class="t" style="left:31.20px;top:688.10px;height:21px;line-height:21px;font-size:15px;color:#000;transform:scaleX(0.8280);transform-origin:left center;">USDJPY</div>
<div class="t" style="left:103.22px;top:688.10px;height:21px;line-height:21px;font-size:15px;color:#ff0000;transform:scaleX(0.9253);transform-origin:right center;">113<span style="letter-spacing:-0.82px">....</span></div>
<div class="t" style="left:158.22px;top:688.10px;height:21px;line-height:21px;font-size:15px;color:#ff0000;transform:scaleX(0.9253);transform-origin:right center;">113<span style="letter-spacing:-0.82px">....</span></div>
<div class="t" style="left:31.20px;top:713.10px;height:21px;line-height:21px;font-size:15px;color:#000;transform:scaleX(0.8822);transform-origin:left center;">GOLD</div>
<div class="t" style="left:97.10px;top:713.10px;height:21px;line-height:21px;font-size:15px;color:#0000ff;transform:scaleX(0.9102);transform-origin:right center;">1215<span style="letter-spacing:-0.82px">...</span></div>
<div class="t" style="left:152.10px;top:713.10px;height:21px;line-height:21px;font-size:15px;color:#0000ff;transform:scaleX(0.9102);transform-origin:right center;">1215<span style="letter-spacing:-0.82px">...</span></div>
<div class="t" style="left:31.20px;top:738.10px;height:21px;line-height:21px;font-size:15px;color:#000;transform:scaleX(0.8394);transform-origin:left center;">EUR<span style="letter-spacing:-0.82px">...</span></div>
<div class="t" style="left:101.28px;top:738.10px;height:21px;line-height:21px;font-size:15px;color:#ff0000;transform:scaleX(0.8796);transform-origin:right center;">4.04<span style="letter-spacing:-0.82px">...</span></div>
<div class="t" style="left:156.28px;top:738.10px;height:21px;line-height:21px;font-size:15px;color:#ff0000;transform:scaleX(0.8796);transform-origin:right center;">4.04<span style="letter-spacing:-0.82px">...</span></div>
<div class="t" style="left:31.20px;top:763.10px;height:21px;line-height:21px;font-size:15px;color:#000;transform:scaleX(0.8873);transform-origin:left center;">USD<span style="letter-spacing:-0.82px">...</span></div>
<div class="t" style="left:101.28px;top:763.10px;height:21px;line-height:21px;font-size:15px;color:#0000ff;transform:scaleX(0.8796);transform-origin:right center;">3.76<span style="letter-spacing:-0.82px">...</span></div>
<div class="t" style="left:156.28px;top:763.10px;height:21px;line-height:21px;font-size:15px;color:#0000ff;transform:scaleX(0.8796);transform-origin:right center;">3.76<span style="letter-spacing:-0.82px">...</span></div>
<div class="t" style="left:31.20px;top:788.10px;height:21px;line-height:21px;font-size:15px;color:#000;transform:scaleX(0.9546);transform-origin:left center;">NZD<span style="letter-spacing:-0.82px">...</span></div>
<div class="t" style="left:101.28px;top:788.10px;height:21px;line-height:21px;font-size:15px;color:#ff0000;transform:scaleX(0.8796);transform-origin:right center;">0.72<span style="letter-spacing:-0.82px">...</span></div>
<div class="t" style="left:156.28px;top:788.10px;height:21px;line-height:21px;font-size:15px;color:#ff0000;transform:scaleX(0.8796);transform-origin:right center;">0.72<span style="letter-spacing:-0.82px">...</span></div>
<div class="t" style="left:31.20px;top:813.10px;height:21px;line-height:21px;font-size:15px;color:#000;transform:scaleX(0.9546);transform-origin:left center;">NZD<span style="letter-spacing:-0.82px">...</span></div>
<div class="t" style="left:101.28px;top:813.10px;height:21px;line-height:21px;font-size:15px;color:#ff0000;transform:scaleX(0.8796);transform-origin:right center;">0.95<span style="letter-spacing:-0.82px">...</span></div>
<div class="t" style="left:156.28px;top:813.10px;height:21px;line-height:21px;font-size:15px;color:#ff0000;transform:scaleX(0.8796);transform-origin:right center;">0.95<span style="letter-spacing:-0.82px">...</span></div>
<svg width="14" height="14" style="left:11px;top:142px"><path d="M7 1L13.5 8H10V13H4V8H0.5Z" fill="#2db52d" stroke="#0f7a12" stroke-width="1"/><path d="M7 2.8L11 7H9V12H7Z" fill="#7fe07f" opacity=".5"/></svg>
<svg width="14" height="14" style="left:11px;top:167px"><path d="M7 1L13.5 8H10V13H4V8H0.5Z" fill="#2db52d" stroke="#0f7a12" stroke-width="1"/><path d="M7 2.8L11 7H9V12H7Z" fill="#7fe07f" opacity=".5"/></svg>
<svg width="14" height="14" style="left:11px;top:192px"><path d="M7 13L13.5 6H10V1H4V6H0.5Z" fill="#f0603a" stroke="#b8361a" stroke-width="1"/><path d="M7 11.2L3 7H5V2H7Z" fill="#ffb08a" opacity=".6"/></svg>
<svg width="14" height="14" style="left:11px;top:217px"><path d="M7 1L13.5 8H10V13H4V8H0.5Z" fill="#2db52d" stroke="#0f7a12" stroke-width="1"/><path d="M7 2.8L11 7H9V12H7Z" fill="#7fe07f" opacity=".5"/></svg>
<svg width="14" height="14" style="left:11px;top:242px"><path d="M7 1L13.5 8H10V13H4V8H0.5Z" fill="#2db52d" stroke="#0f7a12" stroke-width="1"/><path d="M7 2.8L11 7H9V12H7Z" fill="#7fe07f" opacity=".5"/></svg>
<svg width="14" height="14" style="left:11px;top:267px"><path d="M7 13L13.5 6H10V1H4V6H0.5Z" fill="#f0603a" stroke="#b8361a" stroke-width="1"/><path d="M7 11.2L3 7H5V2H7Z" fill="#ffb08a" opacity=".6"/></svg>
<svg width="14" height="14" style="left:11px;top:292px"><path d="M7 13L13.5 6H10V1H4V6H0.5Z" fill="#f0603a" stroke="#b8361a" stroke-width="1"/><path d="M7 11.2L3 7H5V2H7Z" fill="#ffb08a" opacity=".6"/></svg>
<svg width="14" height="14" style="left:11px;top:317px"><path d="M7 13L13.5 6H10V1H4V6H0.5Z" fill="#f0603a" stroke="#b8361a" stroke-width="1"/><path d="M7 11.2L3 7H5V2H7Z" fill="#ffb08a" opacity=".6"/></svg>
<svg width="14" height="14" style="left:11px;top:342px"><path d="M7 1L13.5 8H10V13H4V8H0.5Z" fill="#2db52d" stroke="#0f7a12" stroke-width="1"/><path d="M7 2.8L11 7H9V12H7Z" fill="#7fe07f" opacity=".5"/></svg>
<svg width="14" height="14" style="left:11px;top:367px"><path d="M7 1L13.5 8H10V13H4V8H0.5Z" fill="#2db52d" stroke="#0f7a12" stroke-width="1"/><path d="M7 2.8L11 7H9V12H7Z" fill="#7fe07f" opacity=".5"/></svg>
<svg width="14" height="14" style="left:11px;top:392px"><path d="M7 13L13.5 6H10V1H4V6H0.5Z" fill="#f0603a" stroke="#b8361a" stroke-width="1"/><path d="M7 11.2L3 7H5V2H7Z" fill="#ffb08a" opacity=".6"/></svg>
<svg width="14" height="14" style="left:11px;top:417px"><path d="M7 1L13.5 8H10V13H4V8H0.5Z" fill="#2db52d" stroke="#0f7a12" stroke-width="1"/><path d="M7 2.8L11 7H9V12H7Z" fill="#7fe07f" opacity=".5"/></svg>
<svg width="14" height="14" style="left:11px;top:442px"><path d="M7 13L13.5 6H10V1H4V6H0.5Z" fill="#f0603a" stroke="#b8361a" stroke-width="1"/><path d="M7 11.2L3 7H5V2H7Z" fill="#ffb08a" opacity=".6"/></svg>
<svg width="14" height="14" style="left:11px;top:467px"><path d="M7 1L13.5 8H10V13H4V8H0.5Z" fill="#2db52d" stroke="#0f7a12" stroke-width="1"/><path d="M7 2.8L11 7H9V12H7Z" fill="#7fe07f" opacity=".5"/></svg>
<svg width="14" height="14" style="left:11px;top:492px"><path d="M7 13L13.5 6H10V1H4V6H0.5Z" fill="#f0603a" stroke="#b8361a" stroke-width="1"/><path d="M7 11.2L3 7H5V2H7Z" fill="#ffb08a" opacity=".6"/></svg>
<svg width="14" height="14" style="left:11px;top:517px"><path d="M7 13L13.5 6H10V1H4V6H0.5Z" fill="#f0603a" stroke="#b8361a" stroke-width="1"/><path d="M7 11.2L3 7H5V2H7Z" fill="#ffb08a" opacity=".6"/></svg>
<svg width="14" height="14" style="left:11px;top:542px"><path d="M7 13L13.5 6H10V1H4V6H0.5Z" fill="#f0603a" stroke="#b8361a" stroke-width="1"/><path d="M7 11.2L3 7H5V2H7Z" fill="#ffb08a" opacity=".6"/></svg>
<svg width="14" height="14" style="left:11px;top:567px"><path d="M7 13L13.5 6H10V1H4V6H0.5Z" fill="#f0603a" stroke="#b8361a" stroke-width="1"/><path d="M7 11.2L3 7H5V2H7Z" fill="#ffb08a" opacity=".6"/></svg>
<svg width="14" height="14" style="left:11px;top:592px"><path d="M7 13L13.5 6H10V1H4V6H0.5Z" fill="#f0603a" stroke="#b8361a" stroke-width="1"/><path d="M7 11.2L3 7H5V2H7Z" fill="#ffb08a" opacity=".6"/></svg>
<svg width="14" height="14" style="left:11px;top:617px"><path d="M7 13L13.5 6H10V1H4V6H0.5Z" fill="#f0603a" stroke="#b8361a" stroke-width="1"/><path d="M7 11.2L3 7H5V2H7Z" fill="#ffb08a" opacity=".6"/></svg>
<svg width="14" height="14" style="left:11px;top:642px"><path d="M7 1L13.5 8H10V13H4V8H0.5Z" fill="#2db52d" stroke="#0f7a12" stroke-width="1"/><path d="M7 2.8L11 7H9V12H7Z" fill="#7fe07f" opacity=".5"/></svg>
<svg width="14" height="14" style="left:11px;top:667px"><path d="M7 13L13.5 6H10V1H4V6H0.5Z" fill="#f0603a" stroke="#b8361a" stroke-width="1"/><path d="M7 11.2L3 7H5V2H7Z" fill="#ffb08a" opacity=".6"/></svg>
<svg width="14" height="14" style="left:11px;top:692px"><path d="M7 13L13.5 6H10V1H4V6H0.5Z" fill="#f0603a" stroke="#b8361a" stroke-width="1"/><path d="M7 11.2L3 7H5V2H7Z" fill="#ffb08a" opacity=".6"/></svg>
<svg width="14" height="14" style="left:11px;top:717px"><path d="M7 1L13.5 8H10V13H4V8H0.5Z" fill="#2db52d" stroke="#0f7a12" stroke-width="1"/><path d="M7 2.8L11 7H9V12H7Z" fill="#7fe07f" opacity=".5"/></svg>
<svg width="14" height="14" style="left:11px;top:742px"><path d="M7 13L13.5 6H10V1H4V6H0.5Z" fill="#f0603a" stroke="#b8361a" stroke-width="1"/><path d="M7 11.2L3 7H5V2H7Z" fill="#ffb08a" opacity=".6"/></svg>
<svg width="14" height="14" style="left:11px;top:767px"><path d="M7 1L13.5 8H10V13H4V8H0.5Z" fill="#2db52d" stroke="#0f7a12" stroke-width="1"/><path d="M7 2.8L11 7H9V12H7Z" fill="#7fe07f" opacity=".5"/></svg>
<svg width="14" height="14" style="left:11px;top:792px"><path d="M7 13L13.5 6H10V1H4V6H0.5Z" fill="#f0603a" stroke="#b8361a" stroke-width="1"/><path d="M7 11.2L3 7H5V2H7Z" fill="#ffb08a" opacity=".6"/></svg>
<svg width="14" height="14" style="left:11px;top:817px"><path d="M7 13L13.5 6H10V1H4V6H0.5Z" fill="#f0603a" stroke="#b8361a" stroke-width="1"/><path d="M7 11.2L3 7H5V2H7Z" fill="#ffb08a" opacity=".6"/></svg>
<div style="left:202px;top:111px;width:21px;height:726px;background:#f0f0f0;"></div>
<div style="left:203px;top:131px;width:18px;height:198px;background:#c1c1c1;"></div>
<svg width="21" height="726" style="left:202px;top:111px"><path d="M5.5 12.5L10.5 7.5L15.5 12.5M5.5 712L10.5 717L15.5 712" stroke="#606060" stroke-width="1.7" fill="none"/></svg>
<div style="left:6px;top:837px;width:217px;height:1px;background:#000;"></div>
<div style="left:8px;top:838px;width:82px;height:24px;background:#fff;border:1px solid #000;border-top:none;border-right:2px solid #000;border-bottom:2px solid #000;"></div>
<div class="t" style="left:20.46px;top:839.50px;height:21px;line-height:21px;font-size:15px;color:#000;letter-spacing:-0.074px;">Symboly</div>
<div class="t" style="left:102.41px;top:839.50px;height:21px;line-height:21px;font-size:15px;color:#7a7a7a;transform:scaleX(0.9816);transform-origin:center center;">Graf ticků</div>
<div style="left:178px;top:842px;width:1px;height:19px;background:#707070;"></div>
<div style="left:229px;top:89px;width:1691px;height:754px;background:#000;"></div>
<svg width="1920" height="1080" viewBox="0 0 1920 1080" style="left:0;top:0" shape-rendering="crispEdges">
<defs><clipPath id="cc"><rect x="233" y="93" width="1625" height="726"/></clipPath></defs>
<path d="M234 111.5H1858 M234 152.5H1858 M234 193.5H1858 M234 234.5H1858 M234 275.5H1858 M234 316.5H1858 M234 357.5H1858 M234 398.5H1858 M234 439.5H1858 M234 480.5H1858 M234 521.5H1858 M234 562.5H1858 M234 603.5H1858 M234 644.5H1858 M234 685.5H1858 M234 726.5H1858 M234 767.5H1858 M234 808.5H1858 M273.5 92V819 M313.5 92V819 M353.5 92V819 M393.5 92V819 M433.5 92V819 M473.5 92V819 M513.5 92V819 M553.5 92V819 M593.5 92V819 M633.5 92V819 M673.5 92V819 M713.5 92V819 M753.5 92V819 M793.5 92V819 M833.5 92V819 M873.5 92V819 M913.5 92V819 M953.5 92V819 M993.5 92V819 M1033.5 92V819 M1073.5 92V819 M1113.5 92V819 M1153.5 92V819 M1193.5 92V819 M1233.5 92V819 M1273.5 92V819 M1313.5 92V819 M1353.5 92V819 M1393.5 92V819 M1433.5 92V819 M1473.5 92V819 M1513.5 92V819 M1553.5 92V819 M1593.5 92V819 M1633.5 92V819 M1673.5 92V819 M1713.5 92V819 M1753.5 92V819 M1793.5 92V819 M1833.5 92V819" stroke="#778899" stroke-width="1" stroke-dasharray="3 3" fill="none"/>
<path d="M409.5 92V819 M625.5 92V819 M833.5 92V819 M1041.5 92V819 M1249.5 92V819 M1449.5 92V819 M1665.5 92V819" stroke="#ffffff" stroke-width="1" stroke-dasharray="3 3" fill="none"/>
<g clip-path="url(#cc)">
<path d="M233 582.5H1858" stroke="#8c9bb0" stroke-width="1"/>
<path d="M233 717.5H1858" stroke="#32cd32" stroke-width="1" stroke-dasharray="11 4 3 4" fill="none"/>
<path d="M233.5 330V439 M241.5 323V401 M249.5 336V398 M257.5 366V370 M254.5 368.5H260.5 M265.5 336V412 M273.5 212V358 M281.5 180V286 M289.5 185V297 M297.5 185V286 M305.5 248V261 M313.5 202V261 M321.5 221V312 M329.5 232V316 M337.5 220V274 M345.5 213V310 M353.5 277V294 M361.5 272V302 M369.5 265V320 M366.5 283.5H372.5 M377.5 238V312 M385.5 232V292 M393.5 207V280 M401.5 236V246 M409.5 222V276 M417.5 170V267 M425.5 170V218 M433.5 194V298 M441.5 264V336 M449.5 306V314 M446.5 311.5H452.5 M457.5 302V332 M465.5 325V364 M473.5 302V349 M481.5 332V369 M489.5 330V388 M497.5 379V384 M494.5 381.5H500.5 M505.5 370V406 M513.5 320V400 M521.5 306V356 M518.5 325.5H524.5 M529.5 266V328 M537.5 262V333 M545.5 311V321 M553.5 273V330 M561.5 250V287 M569.5 222V272 M577.5 226V270 M585.5 220V290 M593.5 290V296 M590.5 293.5H596.5 M601.5 282V317 M609.5 290V318 M617.5 273V314 M625.5 202V284 M633.5 184V232 M641.5 207V213 M649.5 176V214 M657.5 144V212 M665.5 151V201 M673.5 174V218 M681.5 193V236 M689.5 222V231 M686.5 226.5H692.5 M697.5 188V238 M705.5 191V270 M713.5 235V282 M721.5 220V264 M718.5 236.5H724.5 M729.5 233V348 M737.5 343V347 M745.5 303V346 M753.5 315V369 M761.5 323V370 M769.5 290V332 M777.5 305V384 M785.5 358V366 M793.5 351V382 M801.5 332V374 M809.5 331V354 M806.5 336.5H812.5 M817.5 318V366 M825.5 334V374 M833.5 369V382 M841.5 369V428 M849.5 407V472 M857.5 448V487 M865.5 453V525 M873.5 516V790 M881.5 600V619 M889.5 595V640 M897.5 630V756 M905.5 649V744 M913.5 672V736 M921.5 677V720 M929.5 714V730 M937.5 704V735 M945.5 649V714 M953.5 645V682 M961.5 661V702 M969.5 679V719 M977.5 694V699 M974.5 696.5H980.5 M985.5 682V713 M982.5 696.5H988.5 M993.5 685V760 M1001.5 683V726 M1009.5 673V729 M1017.5 700V745 M1025.5 708V713 M1033.5 682V731 M1041.5 669V710 M1049.5 635V698 M1057.5 571V661 M1065.5 544V594 M1073.5 581V593 M1081.5 571V625 M1089.5 598V633 M1097.5 549V638 M1105.5 532V626 M1113.5 492V559 M1121.5 535V544 M1129.5 529V592 M1137.5 558V625 M1145.5 569V612 M1153.5 567V612 M1161.5 599V660 M1169.5 637V644 M1166.5 640.5H1172.5 M1177.5 565V655 M1185.5 564V622 M1193.5 584V635 M1190.5 605.5H1196.5 M1201.5 572V615 M1209.5 577V609 M1217.5 578V590 M1225.5 556V622 M1233.5 558V622 M1241.5 559V606 M1249.5 481V568 M1257.5 463V539 M1265.5 486V514 M1273.5 459V512 M1281.5 446V500 M1289.5 487V539 M1297.5 478V549 M1305.5 515V547 M1302.5 536.5H1308.5 M1313.5 528V539 M1321.5 480V540 M1329.5 468V502 M1337.5 470V557 M1345.5 540V627 M1353.5 565V624 M1361.5 574V582 M1358.5 579.5H1364.5 M1369.5 570V636 M1377.5 611V655 M1385.5 620V648 M1393.5 625V671 M1401.5 661V694 M1398.5 668.5H1404.5 M1409.5 664V682 M1417.5 666V688 M1425.5 661V706 M1433.5 669V702 M1441.5 620V686 M1449.5 639V674 M1457.5 657V707 M1465.5 636V697 M1473.5 600V675 M1481.5 600V678 M1489.5 678V686 M1486.5 682.5H1492.5 M1497.5 673V740 M1505.5 710V748 M1502.5 718.5H1508.5 M1513.5 673V780 M1521.5 652V728 M1529.5 690V744 M1537.5 774V798 M1545.5 757V802 M1553.5 608V788 M1561.5 610V682 M1569.5 641V682 M1577.5 624V681 M1585.5 622V630 M1593.5 549V628 M1601.5 550V585" stroke="#00ff00" stroke-width="1" fill="none"/>
<path d="M247.5 366.5H251.5V383.5H247.5Z M263.5 350.5H267.5V368.5H263.5Z M271.5 232.5H275.5V347.5H271.5Z M287.5 197.5H291.5V285.5H287.5Z M303.5 252.5H307.5V257.5H303.5Z M311.5 232.5H315.5V251.5H311.5Z M327.5 239.5H331.5V299.5H327.5Z M359.5 282.5H363.5V286.5H359.5Z M375.5 250.5H379.5V282.5H375.5Z M391.5 244.5H395.5V272.5H391.5Z M399.5 236.5H403.5V242.5H399.5Z M415.5 185.5H419.5V263.5H415.5Z M471.5 340.5H475.5V345.5H471.5Z M511.5 325.5H515.5V397.5H511.5Z M527.5 271.5H531.5V325.5H527.5Z M543.5 313.5H547.5V317.5H543.5Z M551.5 282.5H555.5V312.5H551.5Z M559.5 254.5H563.5V281.5H559.5Z M567.5 241.5H571.5V253.5H567.5Z M615.5 282.5H619.5V308.5H615.5Z M623.5 221.5H627.5V281.5H623.5Z M631.5 212.5H635.5V220.5H631.5Z M639.5 210.5H643.5V212.5H639.5Z M647.5 206.5H651.5V210.5H647.5Z M655.5 153.5H659.5V205.5H655.5Z M695.5 194.5H699.5V225.5H695.5Z M711.5 236.5H715.5V261.5H711.5Z M735.5 343.5H739.5V345.5H735.5Z M743.5 331.5H747.5V343.5H743.5Z M759.5 328.5H763.5V351.5H759.5Z M767.5 311.5H771.5V327.5H767.5Z M791.5 356.5H795.5V360.5H791.5Z M799.5 336.5H803.5V355.5H799.5Z M823.5 356.5H827.5V359.5H823.5Z M831.5 370.5H835.5V380.5H831.5Z M855.5 460.5H859.5V467.5H855.5Z M879.5 602.5H883.5V615.5H879.5Z M903.5 706.5H907.5V743.5H903.5Z M911.5 682.5H915.5V707.5H911.5Z M927.5 720.5H931.5V725.5H927.5Z M935.5 712.5H939.5V719.5H935.5Z M943.5 659.5H947.5V711.5H943.5Z M999.5 689.5H1003.5V713.5H999.5Z M1015.5 710.5H1019.5V720.5H1015.5Z M1023.5 710.5H1027.5V712.5H1023.5Z M1031.5 690.5H1035.5V709.5H1031.5Z M1039.5 688.5H1043.5V690.5H1039.5Z M1047.5 660.5H1051.5V687.5H1047.5Z M1055.5 586.5H1059.5V659.5H1055.5Z M1063.5 562.5H1067.5V585.5H1063.5Z M1071.5 584.5H1075.5V591.5H1071.5Z M1095.5 608.5H1099.5V629.5H1095.5Z M1103.5 551.5H1107.5V607.5H1103.5Z M1111.5 527.5H1115.5V551.5H1111.5Z M1119.5 536.5H1123.5V539.5H1119.5Z M1175.5 578.5H1179.5V638.5H1175.5Z M1199.5 591.5H1203.5V603.5H1199.5Z M1207.5 580.5H1211.5V591.5H1207.5Z M1215.5 584.5H1219.5V586.5H1215.5Z M1231.5 574.5H1235.5V607.5H1231.5Z M1239.5 565.5H1243.5V573.5H1239.5Z M1247.5 528.5H1251.5V565.5H1247.5Z M1255.5 466.5H1259.5V527.5H1255.5Z M1271.5 466.5H1275.5V510.5H1271.5Z M1311.5 529.5H1315.5V536.5H1311.5Z M1319.5 490.5H1323.5V529.5H1319.5Z M1351.5 576.5H1355.5V605.5H1351.5Z M1431.5 680.5H1435.5V695.5H1431.5Z M1439.5 640.5H1443.5V679.5H1439.5Z M1463.5 651.5H1467.5V688.5H1463.5Z M1471.5 610.5H1475.5V650.5H1471.5Z M1511.5 704.5H1515.5V717.5H1511.5Z M1527.5 716.5H1531.5V725.5H1527.5Z M1535.5 775.5H1539.5V795.5H1535.5Z M1551.5 614.5H1555.5V785.5H1551.5Z M1567.5 645.5H1571.5V675.5H1567.5Z M1575.5 627.5H1579.5V645.5H1575.5Z M1583.5 625.5H1587.5V627.5H1583.5Z M1591.5 554.5H1595.5V623.5H1591.5Z" stroke="#00ff00" stroke-width="1" fill="#000"/>
<path d="M231.5 333.5H235.5V377.5H231.5Z M239.5 378.5H243.5V383.5H239.5Z M279.5 232.5H283.5V285.5H279.5Z M295.5 197.5H299.5V262.5H295.5Z M319.5 232.5H323.5V299.5H319.5Z M335.5 239.5H339.5V245.5H335.5Z M343.5 248.5H347.5V295.5H343.5Z M351.5 280.5H355.5V286.5H351.5Z M383.5 250.5H387.5V272.5H383.5Z M407.5 237.5H411.5V263.5H407.5Z M423.5 180.5H427.5V199.5H423.5Z M431.5 201.5H435.5V293.5H431.5Z M439.5 294.5H443.5V312.5H439.5Z M455.5 310.5H459.5V324.5H455.5Z M463.5 326.5H467.5V345.5H463.5Z M479.5 340.5H483.5V361.5H479.5Z M487.5 363.5H491.5V381.5H487.5Z M503.5 380.5H507.5V397.5H503.5Z M535.5 272.5H539.5V311.5H535.5Z M575.5 241.5H579.5V259.5H575.5Z M583.5 260.5H587.5V283.5H583.5Z M599.5 294.5H603.5V296.5H599.5Z M607.5 297.5H611.5V307.5H607.5Z M663.5 153.5H667.5V193.5H663.5Z M671.5 194.5H675.5V209.5H671.5Z M679.5 211.5H683.5V223.5H679.5Z M703.5 193.5H707.5V259.5H703.5Z M727.5 235.5H731.5V343.5H727.5Z M751.5 331.5H755.5V351.5H751.5Z M775.5 311.5H779.5V360.5H775.5Z M783.5 360.5H787.5V363.5H783.5Z M815.5 336.5H819.5V359.5H815.5Z M839.5 370.5H843.5V414.5H839.5Z M847.5 415.5H851.5V467.5H847.5Z M863.5 460.5H867.5V518.5H863.5Z M871.5 519.5H875.5V599.5H871.5Z M887.5 602.5H891.5V631.5H887.5Z M895.5 631.5H899.5V743.5H895.5Z M919.5 683.5H923.5V710.5H919.5Z M951.5 659.5H955.5V665.5H951.5Z M959.5 666.5H963.5V681.5H959.5Z M967.5 682.5H971.5V691.5H967.5Z M991.5 696.5H995.5V713.5H991.5Z M1007.5 689.5H1011.5V720.5H1007.5Z M1079.5 583.5H1083.5V617.5H1079.5Z M1087.5 618.5H1091.5V629.5H1087.5Z M1127.5 536.5H1131.5V569.5H1127.5Z M1135.5 570.5H1139.5V592.5H1135.5Z M1143.5 593.5H1147.5V595.5H1143.5Z M1151.5 598.5H1155.5V606.5H1151.5Z M1159.5 608.5H1163.5V639.5H1159.5Z M1183.5 578.5H1187.5V604.5H1183.5Z M1223.5 586.5H1227.5V607.5H1223.5Z M1263.5 494.5H1267.5V510.5H1263.5Z M1279.5 466.5H1283.5V488.5H1279.5Z M1287.5 489.5H1291.5V512.5H1287.5Z M1295.5 513.5H1299.5V535.5H1295.5Z M1327.5 490.5H1331.5V499.5H1327.5Z M1335.5 499.5H1339.5V550.5H1335.5Z M1343.5 551.5H1347.5V605.5H1343.5Z M1367.5 578.5H1371.5V619.5H1367.5Z M1375.5 620.5H1379.5V629.5H1375.5Z M1383.5 630.5H1387.5V635.5H1383.5Z M1391.5 638.5H1395.5V666.5H1391.5Z M1407.5 668.5H1411.5V671.5H1407.5Z M1415.5 672.5H1419.5V673.5H1415.5Z M1423.5 674.5H1427.5V695.5H1423.5Z M1447.5 642.5H1451.5V670.5H1447.5Z M1455.5 671.5H1459.5V688.5H1455.5Z M1479.5 610.5H1483.5V667.5H1479.5Z M1495.5 681.5H1499.5V718.5H1495.5Z M1519.5 704.5H1523.5V724.5H1519.5Z M1543.5 774.5H1547.5V785.5H1543.5Z M1559.5 613.5H1563.5V677.5H1559.5Z M1599.5 554.5H1603.5V581.5H1599.5Z" stroke="#00ff00" stroke-width="1" fill="#fff"/>
<polyline points="270.5,92.0 275.5,112.0" fill="none" stroke="#3cb371" stroke-width="1" />
<polyline points="293.9,193.0 295.8,200.5 298.2,213.0 300.8,229.2 305.1,250.5 309.5,258.0 314.5,264.2 321.4,269.9 328.2,270.5 334.5,270.9 338.2,274.2 344.5,279.9 352.0,283.0 361.5,286.8 369.5,289.9 377.5,291.5 383.9,289.2 393.5,281.1 401.5,275.5 409.5,269.9 417.5,259.9 425.5,252.4 429.5,253.6 433.5,255.5 439.5,256.5 449.5,261.8 457.5,266.1 464.5,269.9 472.0,274.2 474.2,275.8 481.8,280.8 489.2,287.0 498.0,293.2 505.5,298.2 513.0,300.8 521.8,302.0 529.2,301.5 538.0,304.5 545.5,306.5 553.0,307.5 561.8,309.0 569.2,308.2 578.0,312.0 585.5,315.8 593.0,315.8 601.8,315.8 609.2,315.8 618.0,314.5 625.5,309.5 633.0,303.2 641.8,294.5 650.5,284.5 658.0,274.5 665.5,264.5 673.0,258.2 681.8,252.0 690.5,248.2 698.0,243.2 700.0,242.0 710.0,239.0 721.2,238.2 730.0,242.0 737.5,247.0 753.8,252.5 770.0,253.2 780.0,259.5 793.8,273.2 807.5,284.5 817.5,297.0 833.8,313.2 842.5,322.0 852.5,340.0 865.0,357.5 873.8,380.0 890.0,415.0 913.8,465.0 926.2,495.0 952.5,555.0 955.0,560.0 970.0,590.0 985.0,623.8 1001.2,657.5 1015.0,677.5 1025.0,686.2 1033.8,691.2 1041.2,695.0 1050.0,697.0 1057.5,690.0 1075.0,675.0 1090.0,666.2 1105.0,655.0 1121.2,641.2 1137.5,631.2 1153.8,621.2 1162.5,617.5 1170.0,613.8 1172.0,612.5 1184.5,605.0 1199.5,591.2 1209.5,587.5 1225.8,592.5 1234.5,591.2 1242.0,586.2 1258.2,576.2 1272.0,571.2 1282.0,568.8 1302.0,562.5 1313.2,556.2 1329.5,543.0 1344.5,541.2 1360.8,539.5 1377.0,543.8 1393.2,550.0 1409.5,563.8 1425.8,585.0 1442.0,600.0 1449.5,606.2 1465.8,620.0 1473.2,622.5 1482.0,633.8 1497.0,647.5 1513.2,655.0 1522.0,665.0 1529.5,673.8 1538.2,682.5 1545.8,690.0 1553.2,687.5 1560.8,688.0 1569.5,685.0 1577.0,683.8 1584.5,680.0 1593.2,673.8 1600.8,671.2" fill="none" stroke="#3cb371" stroke-width="1" />
<polyline points="310.5,99.5 314.2,112.0" fill="none" stroke="#3cb371" stroke-width="1" />
<polyline points="488.0,186.5 496.8,187.0 505.5,183.2 513.0,184.0 520.5,186.5 529.2,185.8 538.0,189.5 545.5,193.2 553.0,197.0 560.5,201.5 569.2,197.0 578.0,214.5 585.5,229.5 608.0,229.5 617.6,226.2 625.5,212.5 633.5,198.1 641.5,188.1 649.5,181.2 657.5,165.6 665.5,166.5 673.5,162.5 682.0,162.2 689.5,159.0 697.5,155.4 704.5,158.5 712.0,158.5 721.2,158.2 730.0,149.5 737.5,144.5 745.0,142.0 753.8,137.0 760.0,135.8 770.0,135.0 776.2,131.5 786.2,131.5 795.0,135.8 802.5,142.0 810.0,150.8 817.5,169.5 825.0,184.5 833.8,199.5 841.2,205.8 848.8,209.5 857.5,229.5 865.0,227.5 873.8,220.0 881.2,224.5 888.8,212.0 897.5,187.5 906.2,182.5 912.5,183.2 921.2,190.8 927.5,203.2 936.2,217.0 943.8,234.5 952.5,255.8 960.0,282.0 967.5,317.0 973.8,340.0 977.5,357.5 985.0,398.8 992.5,440.0 1000.0,480.0 1008.8,521.2 1016.2,562.5 1025.0,612.5 1033.8,632.5 1041.2,646.2 1049.5,655.0 1055.0,637.5 1062.5,606.2 1070.0,588.8 1073.8,583.8 1082.5,578.8 1090.0,575.0 1097.5,567.5 1105.0,551.2 1113.8,525.0 1122.5,512.5 1130.0,506.2 1137.5,502.5 1147.5,500.0 1157.5,502.0 1170.0,508.0 1172.0,508.8 1179.5,509.5 1194.5,521.2 1209.5,528.8 1218.2,530.0 1225.8,533.0 1234.5,532.5 1242.0,529.5 1249.5,522.5 1257.0,500.0 1265.8,486.2 1273.2,476.2 1282.0,467.5 1289.5,463.8 1307.0,457.5 1320.8,451.2 1344.5,451.2 1353.2,453.8 1362.0,453.0 1372.0,448.8 1384.5,443.8 1393.2,435.0 1400.8,429.5 1408.2,427.5 1417.0,437.5 1425.8,439.5 1433.2,453.8 1440.8,467.5 1449.5,480.0 1473.2,507.5 1482.0,537.5 1489.5,562.5 1497.0,576.2 1505.8,580.0 1513.2,592.5 1522.0,606.2 1529.5,613.8 1544.5,609.5 1553.2,601.2 1560.8,600.0 1569.5,597.5 1577.0,592.5 1584.5,586.2 1593.2,562.5 1601.5,553.0" fill="none" stroke="#3cb371" stroke-width="1" />
<polyline points="232.5,553.0 242.5,610.0 252.0,650.0 265.0,700.0 270.0,712.0 273.8,717.5 278.0,712.0 282.5,700.0 290.0,650.0 297.5,600.0 299.2,570.0 303.0,480.0 305.5,428.8 313.5,409.5 336.8,408.8 345.5,402.5 373.0,400.0 385.5,394.5 425.5,317.0 448.0,330.0 465.5,348.8 503.0,412.5 513.0,416.2 545.5,420.0 558.0,417.0 569.2,419.5 585.5,401.2 613.0,401.2 633.0,402.5 640.5,397.5 650.5,385.0 658.0,380.0 665.5,358.0 683.0,339.5 690.5,337.5 700.0,327.5 700.0,328.2 710.0,319.0 721.2,317.0 727.5,332.0 732.5,343.2 745.0,354.5 753.8,368.8 768.8,372.5 793.8,407.5 810.0,419.5 825.0,420.5 833.8,423.8 841.2,433.8 850.0,457.5 857.5,462.5 866.2,500.0 875.0,540.0 886.2,587.5 895.0,642.5 905.0,700.0 915.0,750.0 926.2,795.0 935.0,818.8" fill="none" stroke="#3cb371" stroke-width="1" />
<polyline points="998.8,818.8 1007.5,806.2 1012.5,792.5 1018.8,777.5 1025.0,763.8 1032.5,756.2 1041.2,745.0 1050.0,739.5 1057.5,750.0 1065.0,760.0 1073.8,768.8 1082.5,766.2 1097.5,757.5 1105.0,763.8 1113.8,771.2 1121.2,772.5 1130.0,767.5 1145.0,752.5 1153.8,741.2 1162.5,735.0 1170.0,720.0 1172.0,717.5 1184.5,690.0 1197.0,665.0 1209.5,650.5 1225.8,652.5 1234.5,652.0 1249.5,647.0 1257.0,656.2 1265.8,658.8 1274.5,668.8 1289.5,670.0 1302.0,665.0 1313.2,660.0 1322.0,646.2 1329.5,633.8 1337.0,632.0 1344.5,632.5 1360.8,625.5 1369.5,633.8 1384.5,650.0 1393.2,666.2 1402.0,682.5 1412.0,700.0 1422.0,720.0 1427.0,725.0 1434.5,730.0 1442.0,731.2 1449.5,737.5 1457.0,742.5 1465.8,745.0 1473.2,741.2 1482.0,732.5 1489.5,723.8 1497.0,726.2 1507.0,732.5 1522.0,733.8 1529.5,738.8 1537.0,752.5 1545.8,770.0 1553.2,774.5 1569.5,775.5 1577.0,777.0 1584.5,776.2 1593.2,785.0 1600.8,788.0" fill="none" stroke="#3cb371" stroke-width="1" />
<polyline points="238.0,92.0 240.5,112.0" fill="none" stroke="#ff0000" stroke-width="1" />
<polyline points="250.8,193.0 252.6,206.8 255.1,229.2 257.6,246.8 260.8,258.0 265.1,270.5 270.8,274.9 275.1,277.0 280.8,279.5 289.5,279.2 293.2,284.2 298.2,288.6 304.5,291.1 313.2,291.5 318.2,294.9 321.4,297.4 328.2,298.6 332.0,296.8 338.2,291.8 344.5,286.8 350.8,281.1 357.0,276.1 364.5,269.9 369.5,266.1 374.5,262.4 377.6,260.5 380.8,261.1 385.1,263.4 389.5,261.8 393.5,260.5 398.2,261.8 401.4,263.2 409.5,263.4 413.2,261.1 417.6,258.6 422.0,256.8 425.8,256.1 432.0,256.4 437.0,258.0 443.2,262.4 449.5,266.1 457.0,268.6 464.5,271.8 472.0,276.1 474.2,277.0 481.8,282.0 489.2,289.5 498.0,299.5 505.5,309.5 513.0,318.2 521.8,324.5 530.5,329.5 538.0,334.0 545.5,335.8 553.0,334.5 561.8,330.8 569.2,325.8 578.0,317.0 585.5,312.0 593.0,307.0 601.8,299.5 609.2,294.0 618.0,288.2 625.5,283.2 633.0,274.5 641.8,268.2 650.5,259.5 658.0,249.5 665.5,243.2 673.0,240.8 681.8,239.5 690.5,235.8 698.0,231.5 700.0,230.8 721.2,220.0 730.0,223.2 753.8,248.2 770.0,273.2 793.8,303.2 817.5,328.2 833.8,345.8 833.8,346.2 850.0,360.0 865.0,381.2 873.8,402.5 890.0,440.0 902.5,480.0 913.8,520.0 926.2,561.2 933.8,582.5 942.5,607.5 952.5,630.0 961.2,651.2 970.0,667.5 977.5,678.8 985.0,685.0 993.8,695.0 1002.5,697.5 1010.0,696.2 1017.5,696.2 1027.5,698.0 1036.2,696.2 1050.0,690.0 1057.5,683.8 1072.5,671.2 1090.0,660.0 1105.0,643.8 1113.8,628.8 1121.2,617.5 1130.0,607.5 1145.0,595.0 1153.8,587.5 1161.2,586.2 1170.0,590.0 1172.0,590.5 1184.5,592.5 1199.5,588.8 1209.5,587.0 1218.2,590.0 1225.8,595.0 1234.5,598.0 1242.0,597.0 1249.5,593.8 1258.2,583.8 1265.8,575.0 1272.0,566.2 1282.0,555.0 1297.0,545.0 1312.0,535.0 1322.0,528.8 1329.5,522.5 1337.0,519.5 1345.8,519.5 1354.5,521.2 1362.0,525.0 1369.5,533.8 1377.0,543.8 1384.5,556.2 1393.2,572.5 1402.0,583.8 1412.0,597.5 1422.0,610.0 1433.2,625.0 1442.0,636.2 1449.5,642.5 1457.0,648.8 1465.8,655.0 1473.2,657.5 1482.0,660.0 1489.5,665.0 1497.0,670.0 1507.0,675.0 1522.0,680.0 1529.5,682.5 1538.2,688.8 1545.8,696.2 1552.0,694.5 1560.8,695.0 1569.5,691.2 1577.0,690.0 1585.8,690.5 1593.2,682.5 1600.8,677.0" fill="none" stroke="#ff0000" stroke-width="1" />
<line x1="657.5" y1="144.5" x2="1824.4" y2="705.5" stroke="#ff0000" stroke-width="1"/>
<polyline points="1482.0,744.5 1545.8,807.0" fill="none" stroke="#ff0000" stroke-width="1" />
<polyline points="1521.5,653.8 1546.2,731.2 1547.0,710.0 1545.8,760.0 1553.2,608.8" fill="none" stroke="#ff0000" stroke-width="1" />
<polyline points="1577.0,680.0 1579.5,640.0 1582.0,585.0 1584.5,512.5 1585.8,502.0" fill="none" stroke="#ff0000" stroke-width="1" />
<path d="M233 780H1858" stroke="#4169e1" stroke-width="2" fill="none"/>
<path d="M233 795H1858" stroke="#ff0000" stroke-width="2" stroke-dasharray="11 4 3 4" fill="none"/>
<path d="M233 796.5H1858" stroke="#32cd32" stroke-width="1" stroke-dasharray="11 4 3 4" fill="none"/>
</g>
<path d="M232.5 92V819.5 M232 92.5H1858.5 M1858.5 92V819.5 M232 819.5H1859" stroke="#fff" stroke-width="1" fill="none"/>
<path d="M1859 111.5H1862 M1859 152.5H1862 M1859 193.5H1862 M1859 234.5H1862 M1859 275.5H1862 M1859 316.5H1862 M1859 357.5H1862 M1859 398.5H1862 M1859 439.5H1862 M1859 480.5H1862 M1859 521.5H1862 M1859 562.5H1862 M1859 603.5H1862 M1859 644.5H1862 M1859 685.5H1862 M1859 726.5H1862 M1859 767.5H1862 M1859 808.5H1862 M233.5 820V824 M313.5 820V824 M393.5 820V824 M473.5 820V824 M553.5 820V824 M633.5 820V824 M713.5 820V824 M793.5 820V824 M873.5 820V824 M953.5 820V824 M1033.5 820V824 M1113.5 820V824 M1193.5 820V824 M1273.5 820V824 M1353.5 820V824 M1433.5 820V824 M1513.5 820V824 M1593.5 820V824" stroke="#fff" stroke-width="1" fill="none"/>
<path d="M1606 93H1619L1612.5 99.5Z" fill="#8090a8" shape-rendering="auto"/>
<path d="M236 104.5L240.5 98L245 104.5Z" fill="#fff" shape-rendering="auto"/>
<g font-family="Liberation Sans, sans-serif" font-size="12" fill="#fff" shape-rendering="auto">
<text x="1866" y="115.8" textLength="44.5" lengthAdjust="spacingAndGlyphs">1.35180</text>
<text x="1866" y="156.8" textLength="44.5" lengthAdjust="spacingAndGlyphs">1.34260</text>
<text x="1866" y="197.8" textLength="44.5" lengthAdjust="spacingAndGlyphs">1.33360</text>
<text x="1866" y="238.8" textLength="44.5" lengthAdjust="spacingAndGlyphs">1.32440</text>
<text x="1866" y="279.8" textLength="44.5" lengthAdjust="spacingAndGlyphs">1.31540</text>
<text x="1866" y="320.8" textLength="44.5" lengthAdjust="spacingAndGlyphs">1.30620</text>
<text x="1866" y="361.8" textLength="44.5" lengthAdjust="spacingAndGlyphs">1.29720</text>
<text x="1866" y="402.8" textLength="44.5" lengthAdjust="spacingAndGlyphs">1.28800</text>
<text x="1866" y="443.8" textLength="44.5" lengthAdjust="spacingAndGlyphs">1.27900</text>
<text x="1866" y="484.8" textLength="44.5" lengthAdjust="spacingAndGlyphs">1.26980</text>
<text x="1866" y="525.8" textLength="44.5" lengthAdjust="spacingAndGlyphs">1.26080</text>
<text x="1866" y="566.8" textLength="44.5" lengthAdjust="spacingAndGlyphs">1.25160</text>
<text x="1866" y="607.8" textLength="44.5" lengthAdjust="spacingAndGlyphs">1.24260</text>
<text x="1866" y="648.8" textLength="44.5" lengthAdjust="spacingAndGlyphs">1.23340</text>
<text x="1866" y="689.8" textLength="44.5" lengthAdjust="spacingAndGlyphs">1.22440</text>
<text x="1866" y="730.8" textLength="44.5" lengthAdjust="spacingAndGlyphs">1.21540</text>
<text x="1866" y="771.8" textLength="44.5" lengthAdjust="spacingAndGlyphs">1.20620</text>
<text x="1866" y="812.8" textLength="44.5" lengthAdjust="spacingAndGlyphs">1.19720</text>
<text x="232.5" y="834.5">6 Jul 2016</text>
<text x="312.5" y="834.5">18 Jul 2016</text>
<text x="392.5" y="834.5">29 Jul 2016</text>
<text x="472.5" y="834.5">10 Aug 2016</text>
<text x="552.5" y="834.5">22 Aug 2016</text>
<text x="632.5" y="834.5">2 Sep 2016</text>
<text x="712.5" y="834.5">14 Sep 2016</text>
<text x="792.5" y="834.5">26 Sep 2016</text>
<text x="872.5" y="834.5">7 Oct 2016</text>
<text x="952.5" y="834.5">19 Oct 2016</text>
<text x="1032.5" y="834.5">31 Oct 2016</text>
<text x="1112.5" y="834.5">11 Nov 2016</text>
<text x="1192.5" y="834.5">23 Nov 2016</text>
<text x="1272.5" y="834.5">5 Dec 2016</text>
<text x="1352.5" y="834.5">16 Dec 2016</text>
<text x="1432.5" y="834.5">29 Dec 2016</text>
<text x="1512.5" y="834.5">11 Jan 2017</text>
<text x="1592.5" y="834.5">23 Jan 2017</text>
</g>
<rect x="1860" y="576" width="56" height="13" fill="#fff"/>
<rect x="1860" y="774" width="56" height="14" fill="#4169e1"/>
<g font-family="Liberation Sans, sans-serif" font-size="12" shape-rendering="auto"><text x="1866" y="586.8" fill="#000" textLength="44.5" lengthAdjust="spacingAndGlyphs">1.24736</text><text x="1866" y="785.3" fill="#000" textLength="44.5" lengthAdjust="spacingAndGlyphs">1.20330</text></g>
<g font-family="Liberation Sans, sans-serif" shape-rendering="auto">
<text x="251.5" y="107" font-size="12" fill="#fff" textLength="71.5" lengthAdjust="spacingAndGlyphs">GBPUSD,Daily</text>
<text x="332.5" y="107" font-size="12" fill="#fff" textLength="195" lengthAdjust="spacingAndGlyphs">1.25349 1.25434 1.24676 1.24736</text>
<text x="242" y="714.5" font-size="11.5" fill="#dcdcdc" textLength="117" lengthAdjust="spacingAndGlyphs">#47880069 buy 0.03</text>
<text x="242" y="793" font-size="11.5" fill="#fff" font-weight="bold" textLength="117" lengthAdjust="spacingAndGlyphs">#47894144 buy 0.05</text>
<text x="242" y="793" font-size="11.5" fill="#fff" textLength="117" lengthAdjust="spacingAndGlyphs" opacity="0.7">#47908372 buy 0.08</text>
<text x="1741.5" y="144" font-size="12.5" fill="#3a6fe0" text-anchor="middle" textLength="128" lengthAdjust="spacingAndGlyphs">www.FOREXROBOT.eu</text>
<path d="M1637 140.5H1668 M1816 140.5H1848" stroke="#3a6fe0" stroke-width="1" fill="none" shape-rendering="crispEdges"/>
<text x="1848" y="156.8" font-size="14" fill="#ffa500" text-anchor="end" textLength="187" lengthAdjust="spacingAndGlyphs">Margin 311.39; StopLevel 0.0</text>
<text x="1848" y="171.8" font-size="14" fill="#ffa500" text-anchor="end" textLength="174" lengthAdjust="spacingAndGlyphs">Spread 1.0; TickValue 1.00</text>
<text x="1848" y="186.8" font-size="14" fill="#ffa500" text-anchor="end" textLength="189" lengthAdjust="spacingAndGlyphs">Swap Long -3.40 / Short 1.70</text>
<text x="1848" y="201.8" font-size="14" fill="#ffa500" text-anchor="end" textLength="190" lengthAdjust="spacingAndGlyphs">MinLot 0.01; Leverage 1 : 400</text>
<text x="1848" y="216.8" font-size="14" fill="#ffa500" text-anchor="end" textLength="178" lengthAdjust="spacingAndGlyphs">3x BUY 0.16 / 0x SELL 0.00</text>
<text x="1848" y="235" font-size="15" fill="#ffa500" text-anchor="end" font-weight="bold" stroke="#ffa500" stroke-width="0.7" textLength="145" lengthAdjust="spacingAndGlyphs">Profit 699.38 CHF</text>
</g>
</svg>
<div style="left:236px;top:115px;width:252px;height:76px;background:#000;"></div>
<div style="left:236px;top:116px;width:59px;height:27px;background:linear-gradient(#fa5454,#e23a3a);"></div>
<div style="left:428px;top:116px;width:59px;height:27px;background:linear-gradient(#fa5454,#e23a3a);"></div>
<div style="left:236px;top:142px;width:125px;height:49px;background:linear-gradient(#dc3030,#c01818 55%,#a40000);"></div>
<div style="left:363px;top:142px;width:124px;height:49px;background:linear-gradient(#dc3030,#c01818 55%,#a40000);"></div>
<div style="left:239px;top:142px;width:53px;height:1px;background:#f86060;"></div>
<div style="left:431px;top:142px;width:53px;height:1px;background:#f86060;"></div>
<div style="left:298px;top:116px;width:128px;height:24px;background:#bdbdbd;"></div>
<div style="left:299px;top:117px;width:23px;height:22px;background:#e6e6e6;"></div>
<div style="left:323px;top:117px;width:77px;height:22px;background:#fff;"></div>
<div style="left:402px;top:117px;width:23px;height:22px;background:#e6e6e6;"></div>
<svg width="128" height="24" style="left:298px;top:116px"><path d="M8.5 9.5H16.5L12.5 14Z M110 14H118L114 9.5Z" fill="#000"/></svg>
<div class="t" style="left:366.31px;top:117.50px;height:21px;line-height:21px;font-size:15px;color:#000;letter-spacing:-0.400px;">0.05</div>
<div class="t" style="left:246.54px;top:117.50px;height:22px;line-height:22px;font-size:15.5px;color:#fff;transform:scaleX(0.7912);transform-origin:center center;">SELL</div>
<div class="t" style="left:440.57px;top:117.50px;height:22px;line-height:22px;font-size:15.5px;color:#fff;transform:scaleX(0.8472);transform-origin:center center;">BUY</div>
<div class="t" style="left:256.00px;top:164.00px;height:20px;line-height:20px;font-size:14px;color:#fff;letter-spacing:0.687px;font-weight:bold;">1.24</div>
<div class="t" style="left:382.00px;top:164.00px;height:20px;line-height:20px;font-size:14px;color:#fff;letter-spacing:0.687px;font-weight:bold;">1.24</div>
<div class="t" style="left:291.00px;top:147.30px;height:40px;line-height:40px;font-size:38px;color:#fff;transform:scaleX(0.8990);transform-origin:left center;">73</div>
<div class="t" style="left:417.50px;top:147.30px;height:40px;line-height:40px;font-size:38px;color:#fff;transform:scaleX(0.8990);transform-origin:left center;">74</div>
<div class="t" style="left:334.50px;top:147.00px;height:20px;line-height:20px;font-size:14px;color:#fff;letter-spacing:-0.420px;font-weight:bold;">6</div>
<div class="t" style="left:461.00px;top:147.00px;height:20px;line-height:20px;font-size:14px;color:#fff;letter-spacing:-0.420px;font-weight:bold;">6</div>
<div style="left:229px;top:843px;width:1691px;height:28px;background:#f0f0f0;"></div>
<div class="t" style="left:249.30px;top:846.80px;height:21px;line-height:21px;font-size:15px;color:#6e6e6e;transform:scaleX(0.9658);transform-origin:left center;">USDMXN,Daily</div>
<div class="t" style="left:376.70px;top:846.80px;height:21px;line-height:21px;font-size:15px;color:#6e6e6e;transform:scaleX(0.8675);transform-origin:left center;">EURTRY,H1</div>
<div class="t" style="left:478.30px;top:846.80px;height:21px;line-height:21px;font-size:15px;color:#6e6e6e;transform:scaleX(0.9470);transform-origin:left center;">USDTRY,Monthly</div>
<div class="t" style="left:617.00px;top:846.80px;height:21px;line-height:21px;font-size:15px;color:#6e6e6e;transform:scaleX(0.9575);transform-origin:left center;">AUDCAD,H4</div>
<div class="t" style="left:729.30px;top:846.80px;height:21px;line-height:21px;font-size:15px;color:#6e6e6e;transform:scaleX(0.9045);transform-origin:left center;">EURCAD,H1</div>
<div class="t" style="left:837.30px;top:846.80px;height:21px;line-height:21px;font-size:15px;color:#6e6e6e;transform:scaleX(0.8897);transform-origin:left center;">USDJPY,H4</div>
<div class="t" style="left:937.30px;top:846.80px;height:21px;line-height:21px;font-size:15px;color:#6e6e6e;transform:scaleX(0.8956);transform-origin:left center;">GBPCHF,H4</div>
<div class="t" style="left:1042.30px;top:846.80px;height:21px;line-height:21px;font-size:15px;color:#6e6e6e;transform:scaleX(0.9219);transform-origin:left center;">AUDJPY,Weekly</div>
<div class="t" style="left:1173.30px;top:846.80px;height:21px;line-height:21px;font-size:15px;color:#6e6e6e;transform:scaleX(0.9029);transform-origin:left center;">EURCHF,H1</div>
<div class="t" style="left:1278.00px;top:846.80px;height:21px;line-height:21px;font-size:15px;color:#6e6e6e;transform:scaleX(0.9394);transform-origin:left center;">GBPAUD,Daily</div>
<div class="t" style="left:1400.70px;top:846.80px;height:21px;line-height:21px;font-size:15px;color:#6e6e6e;transform:scaleX(0.9148);transform-origin:left center;">USDCAD,H1</div>
<div class="t" style="left:1628.30px;top:846.80px;height:21px;line-height:21px;font-size:15px;color:#6e6e6e;transform:scaleX(0.9192);transform-origin:left center;">EURUSD,Daily</div>
<div class="t" style="left:1748.30px;top:846.80px;height:21px;line-height:21px;font-size:15px;color:#6e6e6e;transform:scaleX(0.9670);transform-origin:left center;">NZDUSD,Daily</div>
<div style="left:363px;top:847px;width:1px;height:19px;background:#707070;"></div>
<div style="left:464px;top:847px;width:1px;height:19px;background:#707070;"></div>
<div style="left:603px;top:847px;width:1px;height:19px;background:#707070;"></div>
<div style="left:716px;top:847px;width:1px;height:19px;background:#707070;"></div>
<div style="left:823px;top:847px;width:1px;height:19px;background:#707070;"></div>
<div style="left:924px;top:847px;width:1px;height:19px;background:#707070;"></div>
<div style="left:1027px;top:847px;width:1px;height:19px;background:#707070;"></div>
<div style="left:1159px;top:847px;width:1px;height:19px;background:#707070;"></div>
<div style="left:1263px;top:847px;width:1px;height:19px;background:#707070;"></div>
<div style="left:1387px;top:847px;width:1px;height:19px;background:#707070;"></div>
<div style="left:1736px;top:847px;width:1px;height:19px;background:#707070;"></div>
<div style="left:1860px;top:847px;width:1px;height:19px;background:#707070;"></div>
<div style="left:1496px;top:843px;width:119px;height:26px;background:#fff;border:1px solid #000;border-top:none;border-right:2px solid #000;border-bottom:2px solid #000;"></div>
<div class="t" style="left:1508.30px;top:846.80px;height:21px;line-height:21px;font-size:15px;color:#000;transform:scaleX(0.9191);transform-origin:left center;">GBPUSD,Daily</div>
<svg width="40" height="14" style="left:1874px;top:849px"><path d="M10 2.5V11.5L4.5 7Z" fill="#9a9a9a"/><path d="M29 2.5V11.5L34.5 7Z" fill="#000"/></svg>
<div style="left:0px;top:870px;width:1920px;height:3px;background:#f0f0f0;"></div>
<div style="left:0px;top:873px;width:1920px;height:176px;background:#f0f0f0;"></div>
<div style="left:0px;top:872px;width:1920px;height:1px;background:#fff;"></div>
<svg width="12" height="12" style="left:4px;top:875px"><path d="M1.5 1.5L9.5 9.5M9.5 1.5L1.5 9.5" stroke="#000" stroke-width="1.4" fill="none"/></svg>
<div style="left:3px;top:893px;width:16px;height:152px;background:linear-gradient(90deg,#b9cbe4,#dde6f3);"></div>
<div class="t" style="left:-18px;top:1005.5px;width:60px;height:18px;line-height:18px;font-size:15px;color:#000;transform:rotate(-90deg);transform-origin:center;text-align:left;letter-spacing:-0.3px">Terminál</div>
<div style="left:20px;top:875px;width:1873px;height:144px;background:#fff;border-left:1px solid #a0a0a0;border-top:1px solid #a0a0a0;overflow:hidden;"></div>
<div style="left:22px;top:927.5px;width:1871px;height:25px;background:#ebebeb;"></div>
<div style="left:22px;top:977.5px;width:1871px;height:25px;background:#ebebeb;"></div>
<svg width="1920" height="1080" style="left:0;top:0" shape-rendering="crispEdges"><path d="M22 902.5H1893 M22 927.5H1893 M22 952.5H1893 M22 977.5H1893 M22 1002.5H1893 M205.5 876V1018 M462.5 876V1018 M590.5 876V1018 M690.5 876V1018 M818.5 876V1018 M960.5 876V1018 M1102.5 876V1018 M1244.5 876V1018 M1386.5 876V1018 M1528.5 876V1018 M1670.5 876V1018 M1893.5 876V1018" stroke="#d4d4d4" stroke-width="1" fill="none"/></svg>
<div class="t" style="left:27.30px;top:879.30px;height:21px;line-height:21px;font-size:15px;color:#000;transform:scaleX(0.9300);transform-origin:left center;">Pokyn</div>
<div class="t" style="left:430.03px;top:879.30px;height:21px;line-height:21px;font-size:15px;color:#000;transform:scaleX(0.9300);transform-origin:right center;">Čas</div>
<div class="t" style="left:560.12px;top:879.30px;height:21px;line-height:21px;font-size:15px;color:#000;transform:scaleX(0.9300);transform-origin:right center;">Typ</div>
<div class="t" style="left:655.11px;top:879.30px;height:21px;line-height:21px;font-size:15px;color:#000;transform:scaleX(0.9300);transform-origin:right center;">Lotů</div>
<div class="t" style="left:742.28px;top:879.30px;height:21px;line-height:21px;font-size:15px;color:#000;transform:scaleX(0.9300);transform-origin:right center;">Symbol</div>
<div class="t" style="left:918.44px;top:879.30px;height:21px;line-height:21px;font-size:15px;color:#000;transform:scaleX(0.9300);transform-origin:right center;">Cena</div>
<div class="t" style="left:1065.85px;top:879.30px;height:21px;line-height:21px;font-size:15px;color:#000;transform:scaleX(0.9300);transform-origin:right center;">S / L</div>
<div class="t" style="left:1138.97px;top:879.30px;height:21px;line-height:21px;font-size:15px;color:#000;transform:scaleX(0.9300);transform-origin:right center;">Realizovat zisk</div>
<div class="t" style="left:1344.14px;top:879.30px;height:21px;line-height:21px;font-size:15px;color:#000;transform:scaleX(0.9300);transform-origin:right center;">Cena</div>
<div class="t" style="left:1472.68px;top:879.30px;height:21px;line-height:21px;font-size:15px;color:#000;transform:scaleX(0.9300);transform-origin:right center;">Provize</div>
<div class="t" style="left:1626.78px;top:879.30px;height:21px;line-height:21px;font-size:15px;color:#000;transform:scaleX(0.9300);transform-origin:right center;">Swap</div>
<div class="t" style="left:1859.21px;top:879.30px;height:21px;line-height:21px;font-size:15px;color:#000;transform:scaleX(0.9300);transform-origin:right center;">Zisk</div>
<svg width="8" height="10" style="left:803px;top:884px"><path d="M1.5 8L5.5 2" stroke="#808080" stroke-width="1"/></svg>
<div style="left:0;top:0;width:1920px;height:1018px;overflow:hidden">
<svg width="20" height="22" style="left:24px;top:904.5px"><path d="M1.5 2.5Q1.5 1.5 2.5 1.5H10L14.5 6V17.5Q14.5 18.5 13.5 18.5H2.5Q1.5 18.5 1.5 17.5Z" fill="#fdfdfd" stroke="#6a6a6a" stroke-width="1.3"/><path d="M10 1.5V6H14.5" fill="#e4e4e4" stroke="#6a6a6a"/><circle cx="13.6" cy="15.6" r="3.7" fill="#e8501c" stroke="#b83a10" stroke-width=".8"/></svg>
<div class="t" style="left:48.30px;top:904.30px;height:21px;line-height:21px;font-size:15px;color:#000;transform:scaleX(0.9550);transform-origin:left center;">48001604</div>
<div class="t" style="left:319.88px;top:904.30px;height:21px;line-height:21px;font-size:15px;color:#000;transform:scaleX(0.9250);transform-origin:right center;">2017.01.24 04:26:44</div>
<div class="t" style="left:563.49px;top:904.30px;height:21px;line-height:21px;font-size:15px;color:#000;transform:scaleX(0.9300);transform-origin:right center;">sell</div>
<div class="t" style="left:656.81px;top:904.30px;height:21px;line-height:21px;font-size:15px;color:#000;transform:scaleX(0.9550);transform-origin:right center;">0.05</div>
<div class="t" style="left:768.14px;top:904.30px;height:21px;line-height:21px;font-size:15px;color:#000;transform:scaleX(0.9300);transform-origin:right center;">eurusd</div>
<div class="t" style="left:902.08px;top:904.30px;height:21px;line-height:21px;font-size:15px;color:#000;transform:scaleX(0.9550);transform-origin:right center;">1.07630</div>
<div class="t" style="left:1044.28px;top:904.30px;height:21px;line-height:21px;font-size:15px;color:#000;transform:scaleX(0.9550);transform-origin:right center;">0.00000</div>
<div class="t" style="left:1186.28px;top:904.30px;height:21px;line-height:21px;font-size:15px;color:#000;transform:scaleX(0.9550);transform-origin:right center;">1.06340</div>
<div class="t" style="left:1328.08px;top:904.30px;height:21px;line-height:21px;font-size:15px;color:#000;transform:scaleX(0.9550);transform-origin:right center;">1.07452</div>
<div class="t" style="left:1495.11px;top:904.30px;height:21px;line-height:21px;font-size:15px;color:#000;transform:scaleX(0.9550);transform-origin:right center;">0.00</div>
<div class="t" style="left:1637.11px;top:904.30px;height:21px;line-height:21px;font-size:15px;color:#000;transform:scaleX(0.9550);transform-origin:right center;">0.00</div>
<div class="t" style="left:1834.11px;top:904.30px;height:21px;line-height:21px;font-size:15px;color:#000;transform:scaleX(0.9550);transform-origin:right center;">8.89</div>
<svg width="14" height="14" style="left:1873px;top:908.5px"><path d="M1.5 1.5L12 12M12 1.5L1.5 12" stroke="#4a4a4a" stroke-width="1.3" fill="none"/></svg>
<svg width="20" height="22" style="left:24px;top:929.5px"><path d="M1.5 2.5Q1.5 1.5 2.5 1.5H10L14.5 6V17.5Q14.5 18.5 13.5 18.5H2.5Q1.5 18.5 1.5 17.5Z" fill="#fdfdfd" stroke="#6a6a6a" stroke-width="1.3"/><path d="M10 1.5V6H14.5" fill="#e4e4e4" stroke="#6a6a6a"/><circle cx="13.6" cy="15.6" r="3.7" fill="#2a8fe8" stroke="#1c6fc0" stroke-width=".8"/></svg>
<div class="t" style="left:48.30px;top:929.30px;height:21px;line-height:21px;font-size:15px;color:#000;transform:scaleX(0.9550);transform-origin:left center;">47880069</div>
<div class="t" style="left:319.88px;top:929.30px;height:21px;line-height:21px;font-size:15px;color:#000;transform:scaleX(0.9250);transform-origin:right center;">2017.01.12 20:02:57</div>
<div class="t" style="left:561.82px;top:929.30px;height:21px;line-height:21px;font-size:15px;color:#000;transform:scaleX(0.9300);transform-origin:right center;">buy</div>
<div class="t" style="left:656.81px;top:929.30px;height:21px;line-height:21px;font-size:15px;color:#000;transform:scaleX(0.9550);transform-origin:right center;">0.03</div>
<div class="t" style="left:764.79px;top:929.30px;height:21px;line-height:21px;font-size:15px;color:#000;transform:scaleX(0.9300);transform-origin:right center;">gbpusd</div>
<div class="t" style="left:902.08px;top:929.30px;height:21px;line-height:21px;font-size:15px;color:#000;transform:scaleX(0.9550);transform-origin:right center;">1.21730</div>
<div class="t" style="left:1044.28px;top:929.30px;height:21px;line-height:21px;font-size:15px;color:#000;transform:scaleX(0.9550);transform-origin:right center;">0.00000</div>
<div class="t" style="left:1186.28px;top:929.30px;height:21px;line-height:21px;font-size:15px;color:#000;transform:scaleX(0.9550);transform-origin:right center;">0.00000</div>
<div class="t" style="left:1328.08px;top:929.30px;height:21px;line-height:21px;font-size:15px;color:#000;transform:scaleX(0.9550);transform-origin:right center;">1.24736</div>
<div class="t" style="left:1495.11px;top:929.30px;height:21px;line-height:21px;font-size:15px;color:#000;transform:scaleX(0.9550);transform-origin:right center;">0.00</div>
<div class="t" style="left:1632.11px;top:929.30px;height:21px;line-height:21px;font-size:15px;color:#000;transform:scaleX(0.9550);transform-origin:right center;">-0.98</div>
<div class="t" style="left:1825.76px;top:929.30px;height:21px;line-height:21px;font-size:15px;color:#000;transform:scaleX(0.9550);transform-origin:right center;">90.04</div>
<svg width="14" height="14" style="left:1873px;top:933.5px"><path d="M1.5 1.5L12 12M12 1.5L1.5 12" stroke="#4a4a4a" stroke-width="1.3" fill="none"/></svg>
<svg width="20" height="22" style="left:24px;top:954.5px"><path d="M1.5 2.5Q1.5 1.5 2.5 1.5H10L14.5 6V17.5Q14.5 18.5 13.5 18.5H2.5Q1.5 18.5 1.5 17.5Z" fill="#fdfdfd" stroke="#6a6a6a" stroke-width="1.3"/><path d="M10 1.5V6H14.5" fill="#e4e4e4" stroke="#6a6a6a"/><circle cx="13.6" cy="15.6" r="3.7" fill="#2a8fe8" stroke="#1c6fc0" stroke-width=".8"/></svg>
<div class="t" style="left:48.30px;top:954.30px;height:21px;line-height:21px;font-size:15px;color:#000;transform:scaleX(0.9550);transform-origin:left center;">47894144</div>
<div class="t" style="left:319.88px;top:954.30px;height:21px;line-height:21px;font-size:15px;color:#000;transform:scaleX(0.9250);transform-origin:right center;">2017.01.15 23:02:38</div>
<div class="t" style="left:561.82px;top:954.30px;height:21px;line-height:21px;font-size:15px;color:#000;transform:scaleX(0.9300);transform-origin:right center;">buy</div>
<div class="t" style="left:656.81px;top:954.30px;height:21px;line-height:21px;font-size:15px;color:#000;transform:scaleX(0.9550);transform-origin:right center;">0.05</div>
<div class="t" style="left:764.79px;top:954.30px;height:21px;line-height:21px;font-size:15px;color:#000;transform:scaleX(0.9300);transform-origin:right center;">gbpusd</div>
<div class="t" style="left:902.08px;top:954.30px;height:21px;line-height:21px;font-size:15px;color:#000;transform:scaleX(0.9550);transform-origin:right center;">1.19979</div>
<div class="t" style="left:1044.28px;top:954.30px;height:21px;line-height:21px;font-size:15px;color:#000;transform:scaleX(0.9550);transform-origin:right center;">1.20000</div>
<div class="t" style="left:1186.28px;top:954.30px;height:21px;line-height:21px;font-size:15px;color:#000;transform:scaleX(0.9550);transform-origin:right center;">0.00000</div>
<div class="t" style="left:1328.08px;top:954.30px;height:21px;line-height:21px;font-size:15px;color:#000;transform:scaleX(0.9550);transform-origin:right center;">1.24736</div>
<div class="t" style="left:1495.11px;top:954.30px;height:21px;line-height:21px;font-size:15px;color:#000;transform:scaleX(0.9550);transform-origin:right center;">0.00</div>
<div class="t" style="left:1632.11px;top:954.30px;height:21px;line-height:21px;font-size:15px;color:#000;transform:scaleX(0.9550);transform-origin:right center;">-1.36</div>
<div class="t" style="left:1817.42px;top:954.30px;height:21px;line-height:21px;font-size:15px;color:#000;transform:scaleX(0.9550);transform-origin:right center;">237.48</div>
<svg width="14" height="14" style="left:1873px;top:958.5px"><path d="M1.5 1.5L12 12M12 1.5L1.5 12" stroke="#4a4a4a" stroke-width="1.3" fill="none"/></svg>
<svg width="20" height="22" style="left:24px;top:979.5px"><path d="M1.5 2.5Q1.5 1.5 2.5 1.5H10L14.5 6V17.5Q14.5 18.5 13.5 18.5H2.5Q1.5 18.5 1.5 17.5Z" fill="#fdfdfd" stroke="#6a6a6a" stroke-width="1.3"/><path d="M10 1.5V6H14.5" fill="#e4e4e4" stroke="#6a6a6a"/><circle cx="13.6" cy="15.6" r="3.7" fill="#2a8fe8" stroke="#1c6fc0" stroke-width=".8"/></svg>
<div class="t" style="left:48.30px;top:979.30px;height:21px;line-height:21px;font-size:15px;color:#000;transform:scaleX(0.9550);transform-origin:left center;">47908372</div>
<div class="t" style="left:319.88px;top:979.30px;height:21px;line-height:21px;font-size:15px;color:#000;transform:scaleX(0.9250);transform-origin:right center;">2017.01.15 23:03:29</div>
<div class="t" style="left:561.82px;top:979.30px;height:21px;line-height:21px;font-size:15px;color:#000;transform:scaleX(0.9300);transform-origin:right center;">buy</div>
<div class="t" style="left:656.81px;top:979.30px;height:21px;line-height:21px;font-size:15px;color:#000;transform:scaleX(0.9550);transform-origin:right center;">0.08</div>
<div class="t" style="left:764.79px;top:979.30px;height:21px;line-height:21px;font-size:15px;color:#000;transform:scaleX(0.9300);transform-origin:right center;">gbpusd</div>
<div class="t" style="left:902.08px;top:979.30px;height:21px;line-height:21px;font-size:15px;color:#000;transform:scaleX(0.9550);transform-origin:right center;">1.20024</div>
<div class="t" style="left:1044.28px;top:979.30px;height:21px;line-height:21px;font-size:15px;color:#000;transform:scaleX(0.9550);transform-origin:right center;">1.20033</div>
<div class="t" style="left:1186.28px;top:979.30px;height:21px;line-height:21px;font-size:15px;color:#000;transform:scaleX(0.9550);transform-origin:right center;">0.00000</div>
<div class="t" style="left:1328.08px;top:979.30px;height:21px;line-height:21px;font-size:15px;color:#000;transform:scaleX(0.9550);transform-origin:right center;">1.24736</div>
<div class="t" style="left:1495.11px;top:979.30px;height:21px;line-height:21px;font-size:15px;color:#000;transform:scaleX(0.9550);transform-origin:right center;">0.00</div>
<div class="t" style="left:1632.11px;top:979.30px;height:21px;line-height:21px;font-size:15px;color:#000;transform:scaleX(0.9550);transform-origin:right center;">-2.17</div>
<div class="t" style="left:1817.42px;top:979.30px;height:21px;line-height:21px;font-size:15px;color:#000;transform:scaleX(0.9550);transform-origin:right center;">376.37</div>
<svg width="14" height="14" style="left:1873px;top:983.5px"><path d="M1.5 1.5L12 12M12 1.5L1.5 12" stroke="#4a4a4a" stroke-width="1.3" fill="none"/></svg>
<svg width="20" height="22" style="left:24px;top:1004.5px"><path d="M1.5 2.5Q1.5 1.5 2.5 1.5H10L14.5 6V17.5Q14.5 18.5 13.5 18.5H2.5Q1.5 18.5 1.5 17.5Z" fill="#fdfdfd" stroke="#6a6a6a" stroke-width="1.3"/><path d="M10 1.5V6H14.5" fill="#e4e4e4" stroke="#6a6a6a"/><circle cx="13.6" cy="15.6" r="3.7" fill="#e8501c" stroke="#b83a10" stroke-width=".8"/></svg>
<div class="t" style="left:48.30px;top:1004.30px;height:21px;line-height:21px;font-size:15px;color:#000;transform:scaleX(0.9550);transform-origin:left center;">47688542</div>
<div class="t" style="left:319.88px;top:1004.30px;height:21px;line-height:21px;font-size:15px;color:#000;transform:scaleX(0.9250);transform-origin:right center;">2016.12.21 12:37:40</div>
<div class="t" style="left:563.49px;top:1004.30px;height:21px;line-height:21px;font-size:15px;color:#000;transform:scaleX(0.9300);transform-origin:right center;">sell</div>
<div class="t" style="left:656.81px;top:1004.30px;height:21px;line-height:21px;font-size:15px;color:#000;transform:scaleX(0.9550);transform-origin:right center;">0.01</div>
<div class="t" style="left:761.48px;top:1004.30px;height:21px;line-height:21px;font-size:15px;color:#000;transform:scaleX(0.9300);transform-origin:right center;">usdmxn</div>
<div class="t" style="left:893.74px;top:1004.30px;height:21px;line-height:21px;font-size:15px;color:#000;transform:scaleX(0.9550);transform-origin:right center;">20.46819</div>
<div class="t" style="left:1044.28px;top:1004.30px;height:21px;line-height:21px;font-size:15px;color:#000;transform:scaleX(0.9550);transform-origin:right center;">0.00000</div>
<div class="t" style="left:1177.94px;top:1004.30px;height:21px;line-height:21px;font-size:15px;color:#000;transform:scaleX(0.9550);transform-origin:right center;">21.22222</div>
<div class="t" style="left:1319.74px;top:1004.30px;height:21px;line-height:21px;font-size:15px;color:#000;transform:scaleX(0.9550);transform-origin:right center;">21.36749</div>
<div class="t" style="left:1495.11px;top:1004.30px;height:21px;line-height:21px;font-size:15px;color:#000;transform:scaleX(0.9550);transform-origin:right center;">0.00</div>
<div class="t" style="left:1637.11px;top:1004.30px;height:21px;line-height:21px;font-size:15px;color:#000;transform:scaleX(0.9550);transform-origin:right center;">2.95</div>
<div class="t" style="left:1820.77px;top:1004.30px;height:21px;line-height:21px;font-size:15px;color:#000;transform:scaleX(0.9550);transform-origin:right center;">-42.03</div>
<svg width="14" height="14" style="left:1873px;top:1008.5px"><path d="M1.5 1.5L12 12M12 1.5L1.5 12" stroke="#4a4a4a" stroke-width="1.3" fill="none"/></svg>
</div>
<div style="left:1893px;top:876px;width:21px;height:142px;background:#f0f0f0;"></div>
<div style="left:1895px;top:939px;width:17.5px;height:20px;background:#c1c1c1;"></div>
<svg width="21" height="142" style="left:1893px;top:876px"><path d="M5.5 13L10.5 8L15.5 13M5.5 128L10.5 133L15.5 128" stroke="#404040" stroke-width="1.6" fill="none"/></svg>
<div style="left:22px;top:1018px;width:1892px;height:1px;background:#000;"></div>
<div style="left:23px;top:1018px;width:78px;height:25px;background:#fff;border:1px solid #000;border-top:none;border-right:2px solid #000;border-bottom:2px solid #000;"></div>
<div class="t" style="left:36.00px;top:1020.00px;height:21px;line-height:21px;font-size:15px;color:#000;letter-spacing:-0.039px;">Obchod</div>
<div class="t" style="left:114.00px;top:1020.00px;height:21px;line-height:21px;font-size:15px;color:#7a7a7a;transform:scaleX(0.9645);transform-origin:left center;">Expozice</div>
<div class="t" style="left:198.30px;top:1020.00px;height:21px;line-height:21px;font-size:15px;color:#7a7a7a;letter-spacing:0.003px;">Historie účtu</div>
<div class="t" style="left:307.30px;top:1020.00px;height:21px;line-height:21px;font-size:15px;color:#7a7a7a;transform:scaleX(0.9685);transform-origin:left center;">Zprávy</div>
<div class="t" style="left:394.00px;top:1020.00px;height:21px;line-height:21px;font-size:15px;color:#7a7a7a;letter-spacing:0.005px;">Alarmy</div>
<div class="t" style="left:466.00px;top:1020.00px;height:21px;line-height:21px;font-size:15px;color:#7a7a7a;transform:scaleX(0.9376);transform-origin:left center;">Poštovní schránka</div>
<div class="t" style="left:632.00px;top:1020.00px;height:21px;line-height:21px;font-size:15px;color:#7a7a7a;letter-spacing:-0.039px;">Obchod</div>
<div class="t" style="left:727.30px;top:1020.00px;height:21px;line-height:21px;font-size:15px;color:#7a7a7a;transform:scaleX(0.9593);transform-origin:left center;">Knihovna</div>
<div class="t" style="left:813.30px;top:1020.00px;height:21px;line-height:21px;font-size:15px;color:#7a7a7a;letter-spacing:-0.071px;">Strategie</div>
<div class="t" style="left:898.30px;top:1020.00px;height:21px;line-height:21px;font-size:15px;color:#7a7a7a;transform:scaleX(0.9621);transform-origin:left center;">Deník</div>
<div class="t" style="left:355.00px;top:1027.50px;height:16px;line-height:16px;font-size:11.5px;color:#e0202a;letter-spacing:0.604px;font-weight:bold;">99</div>
<div class="t" style="left:586.00px;top:1027.50px;height:16px;line-height:16px;font-size:11.5px;color:#e0202a;letter-spacing:0.504px;font-weight:bold;">247</div>
<div class="t" style="left:688.30px;top:1027.50px;height:16px;line-height:16px;font-size:11.5px;color:#e0202a;letter-spacing:0.304px;font-weight:bold;">79</div>
<div style="left:185px;top:1021px;width:1px;height:20px;background:#707070;"></div>
<div style="left:295px;top:1021px;width:1px;height:20px;background:#707070;"></div>
<div style="left:381px;top:1021px;width:1px;height:20px;background:#707070;"></div>
<div style="left:453px;top:1021px;width:1px;height:20px;background:#707070;"></div>
<div style="left:619px;top:1021px;width:1px;height:20px;background:#707070;"></div>
<div style="left:714px;top:1021px;width:1px;height:20px;background:#707070;"></div>
<div style="left:801px;top:1021px;width:1px;height:20px;background:#707070;"></div>
<div style="left:886px;top:1021px;width:1px;height:20px;background:#707070;"></div>
<div style="left:949px;top:1021px;width:1px;height:20px;background:#707070;"></div>
<div style="left:0px;top:1046px;width:1920px;height:4px;background:#fcfcfc;"></div>
<div style="left:0px;top:1050px;width:1920px;height:1px;background:#a6a6a6;"></div>
<div style="left:0px;top:1051px;width:1920px;height:29px;background:#f0f0f0;"></div>
<div class="t" style="left:3.00px;top:1057.00px;height:21px;line-height:21px;font-size:15px;color:#000;transform:scaleX(0.9584);transform-origin:left center;">Pro pomoc, stiskněte F1</div>
<div class="t" style="left:1053.30px;top:1057.00px;height:21px;line-height:21px;font-size:15px;color:#000;letter-spacing:0.139px;">Default</div>
<div style="left:1047px;top:1055px;width:1px;height:23px;background:#b4b4b4;"></div>
<div style="left:1196px;top:1055px;width:1px;height:23px;background:#b4b4b4;"></div>
<div style="left:1327px;top:1055px;width:1px;height:23px;background:#b4b4b4;"></div>
<div style="left:1416px;top:1055px;width:1px;height:23px;background:#b4b4b4;"></div>
<div style="left:1505px;top:1055px;width:1px;height:23px;background:#b4b4b4;"></div>
<div style="left:1590px;top:1055px;width:1px;height:23px;background:#b4b4b4;"></div>
<div style="left:1677px;top:1055px;width:1px;height:23px;background:#b4b4b4;"></div>
<div style="left:1761px;top:1055px;width:1px;height:23px;background:#b4b4b4;"></div>
<svg width="34" height="13" style="left:1767px;top:1059px" shape-rendering="crispEdges"><rect x="0" y="0" width="2" height="11" fill="#5a8a1a"/><rect x="3" y="0" width="2" height="11" fill="#5a8a1a"/><rect x="6" y="0" width="2" height="11" fill="#5a8a1a"/><rect x="9" y="0" width="2" height="11" fill="#5a8a1a"/><rect x="12" y="7" width="2" height="5" fill="#1f5a9a"/><rect x="15" y="6" width="2" height="6" fill="#1f5a9a"/><rect x="18" y="5" width="2" height="7" fill="#1f5a9a"/><rect x="21" y="4" width="2" height="8" fill="#1f5a9a"/><rect x="24" y="3" width="2" height="9" fill="#1f5a9a"/><rect x="27" y="2" width="2" height="10" fill="#1f5a9a"/><rect x="30" y="1" width="2" height="11" fill="#1f5a9a"/></svg>
<div class="t" style="left:1804.00px;top:1057.00px;height:21px;line-height:21px;font-size:15px;color:#000;transform:scaleX(0.9759);transform-origin:left center;">3887/4 kb</div>
<div style="left:0px;top:1078px;width:1920px;height:2px;background:#2b2b2b;"></div>
</body></html>
